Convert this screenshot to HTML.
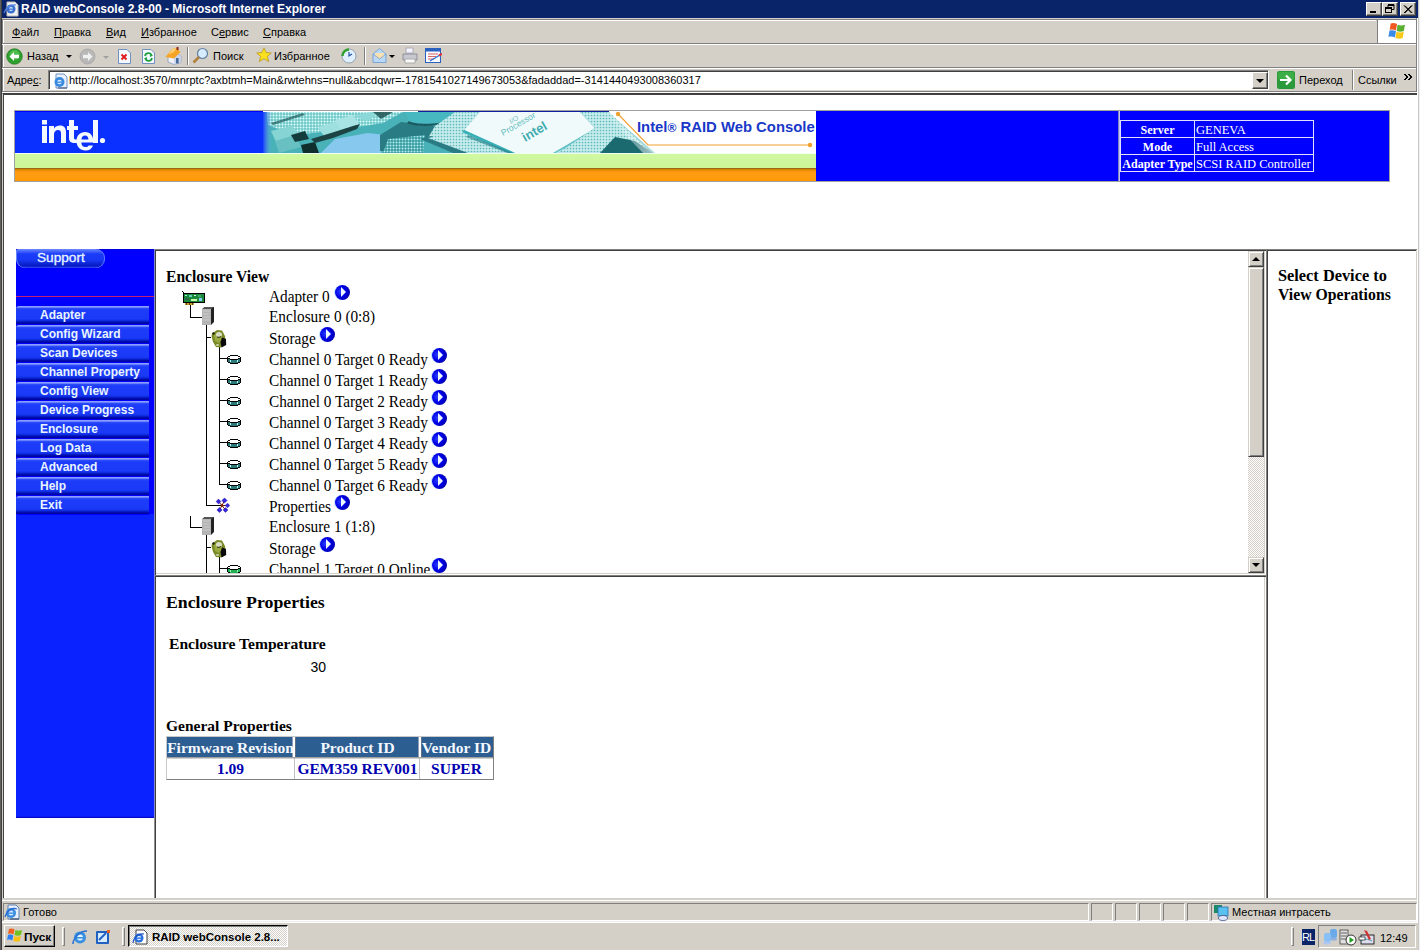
<!DOCTYPE html>
<html><head><meta charset="utf-8">
<style>
*{margin:0;padding:0;box-sizing:border-box}
html,body{width:1420px;height:950px;overflow:hidden;background:#D4D0C8;font-family:"Liberation Sans",sans-serif;}
.a{position:absolute}
.ui{z-index:2;font-family:"Liberation Sans",sans-serif;font-size:11px;color:#000;white-space:nowrap;line-height:13px}
u{text-decoration:underline;text-underline-offset:1px}
.sr{font-family:"Liberation Serif",serif;white-space:nowrap;color:#000}
.nb{position:absolute;left:16px;width:133px;height:19px;background:linear-gradient(#8c9cff 0,#8c9cff 1px,#6880ff 1px,#6880ff 2px,#3050f8 2px,#1c3cfa 4px,#1a3af8 13px,#0c28d8 15px,#0010b0 16px,#0000a0 18px,#0000ff 18px);border-radius:3px 0 0 3px}
.nb span{position:absolute;left:24px;top:2px;font:bold 12px/14px "Liberation Sans",sans-serif;color:#e8f4ff;white-space:nowrap}
.tr{position:absolute;left:269px;font:16px/18px "Liberation Serif",serif;white-space:nowrap;color:#000;transform:scaleX(.955);transform-origin:0 0}
.go{position:absolute;width:15px;height:15px;border-radius:50%;background:radial-gradient(circle at 35% 45%,#2a40ff 0,#0000e8 40%,#0000b0 75%,#000070 100%);box-shadow:-1px 0 0 rgba(120,200,255,.5)}
.go:after{content:"";position:absolute;left:6px;top:2px;border-left:5.5px solid #f0f8ff;border-top:5.2px solid transparent;border-bottom:5.2px solid transparent}
.vl{position:absolute;width:1px;background:#000}
.hl{position:absolute;height:1px;background:#000}
</style></head><body>

<!-- window frame -->
<div class="a" style="left:0;top:0;width:1420px;height:950px;background:#D4D0C8"></div>
<div class="a" style="left:0;top:0;width:1px;height:922px;background:#808080"></div>
<div class="a" style="left:1px;top:0;width:1px;height:922px;background:#404040"></div>

<!-- title bar -->
<div class="a" style="left:0;top:0;width:1418px;height:18px;background:#0A246A"></div>
<div class="a ui" style="left:21px;top:2px;font-weight:bold;font-size:12px;line-height:14px;color:#fff">RAID webConsole 2.8-00 - Microsoft Internet Explorer</div>

<!-- menu bar -->
<div class="a" style="left:2px;top:18px;width:1416px;height:1px;background:#d4d0c8"></div><div class="a" style="left:2px;top:19px;width:1414px;height:1px;background:#808080"></div><div class="a" style="left:3px;top:20px;width:1373px;height:1px;background:#fff"></div><div class="a" style="left:2px;top:19px;width:1px;height:75px;background:#808080"></div><div class="a" style="left:3px;top:20px;width:1px;height:73px;background:#fff"></div>
<div class="a ui" style="left:12px;top:26px"><u>Ф</u>айл</div>
<div class="a ui" style="left:54px;top:26px"><u>П</u>равка</div>
<div class="a ui" style="left:106px;top:26px"><u>В</u>ид</div>
<div class="a ui" style="left:141px;top:26px"><u>И</u>збранное</div>
<div class="a ui" style="left:211px;top:26px">С<u>е</u>рвис</div>
<div class="a ui" style="left:263px;top:26px"><u>С</u>правка</div>
<div class="a" style="left:2px;top:43px;width:1416px;height:1px;background:#808080"></div>
<div class="a" style="left:2px;top:44px;width:1416px;height:1px;background:#fff"></div>

<!-- toolbar -->
<div class="a ui" style="left:27px;top:50px">Назад</div>
<div class="a ui" style="left:213px;top:50px">Поиск</div>
<div class="a ui" style="left:274px;top:50px">Избранное</div>
<div class="a" style="left:2px;top:67px;width:1416px;height:1px;background:#808080"></div>
<div class="a" style="left:2px;top:68px;width:1416px;height:1px;background:#fff"></div>

<!-- address bar -->
<div class="a ui" style="left:7px;top:74px">Адре<u>с</u>:</div>
<div class="a ui" style="left:69px;top:74px">http://localhost:3570/mnrptc?axbtmh=Main&amp;rwtehns=null&amp;abcdqwr=-1781541027149673053&amp;fadaddad=-3141440493008360317</div>
<div class="a ui" style="left:1299px;top:74px">Переход</div>
<div class="a ui" style="left:1358px;top:74px">Ссылки</div>

<div class="a" style="left:1366px;top:2px;width:16px;height:14px;background:#D4D0C8;border-top:1px solid #fff;border-left:1px solid #fff;border-right:1px solid #404040;border-bottom:1px solid #404040;box-shadow:inset -1px -1px 0 #808080"></div>
<div class="a" style="left:1370px;top:11px;width:6px;height:2px;background:#000"></div>
<div class="a" style="left:1382px;top:2px;width:16px;height:14px;background:#D4D0C8;border-top:1px solid #fff;border-left:1px solid #fff;border-right:1px solid #404040;border-bottom:1px solid #404040;box-shadow:inset -1px -1px 0 #808080"></div>
<svg class="a" style="left:1385px;top:4px" width="10" height="10" viewBox="0 0 10 10"><path d="M3 0.5 h6 v5 h-2 M3 1.5 h6" stroke="#000" fill="none"/><path d="M3 1 v2" stroke="#000"/><rect x="0.5" y="3.5" width="6" height="5" fill="none" stroke="#000"/><path d="M0 4.5 h7" stroke="#000"/></svg>
<div class="a" style="left:1400px;top:2px;width:16px;height:14px;background:#D4D0C8;border-top:1px solid #fff;border-left:1px solid #fff;border-right:1px solid #404040;border-bottom:1px solid #404040;box-shadow:inset -1px -1px 0 #808080"></div>
<svg class="a" style="left:1403px;top:5px" width="10" height="9" viewBox="0 0 10 9"><path d="M1 0.5 L8.5 8 M1.8 0.5 L9.3 8 M8.5 0.5 L1 8 M9.3 0.5 L1.8 8" stroke="#000" stroke-width="1"/></svg>
<svg class="a" style="left:3px;top:1px" width="16" height="16" viewBox="0 0 16 16"><path d="M4 1 H12 L15 4 V15 H4 Z" fill="#f0f0f0" stroke="#c0c0c0"/><circle cx="8" cy="8" r="4.5" fill="#3a70d0"/><circle cx="8" cy="8" r="2" fill="#e0f0ff"/><rect x="5" y="7.5" width="6" height="1.3" fill="#3a70d0"/><path d="M1 12 C3 6 9 3 13 4" stroke="#5080e0" stroke-width="1.2" fill="none"/></svg>
<div class="a" style="left:1377px;top:20px;width:40px;height:24px;background:#fff;border-left:1px solid #808080;border-bottom:1px solid #808080"></div>
<svg class="a" style="left:1386px;top:22px" width="21" height="19" viewBox="0 0 19 18"><path d="M4 1.5 C6 0.5 8 1 10 2 L9 8 C7 7 5 6.8 3 7.5 Z" fill="#f05a22"/><path d="M10.5 2.5 C12.5 3.5 15 3.5 17.5 2.5 L16.5 8.5 C14 9.5 12 9.5 9.7 8.5 Z" fill="#5ab030"/><path d="M2.8 8.2 C5 7.5 7 7.7 9 8.7 L8 14.7 C6 13.7 4 13.5 1.8 14.2 Z" fill="#3a8ae8"/><path d="M9.5 9.2 C12 10.2 14 10.2 16.4 9.2 L15.4 15.2 C13 16.2 11 16.2 8.5 15.2 Z" fill="#f8c81a"/></svg>
<div class="a" style="left:1416px;top:18px;width:1px;height:76px;background:#808080"></div>
<div class="a" style="left:187px;top:47px;width:2px;height:18px;border-left:1px solid #808080;border-right:1px solid #fff"></div>
<div class="a" style="left:364px;top:47px;width:2px;height:18px;border-left:1px solid #808080;border-right:1px solid #fff"></div>
<svg class="a" style="left:6px;top:48px" width="17" height="17" viewBox="0 0 17 17"><circle cx="8.5" cy="8.5" r="7.8" fill="#2ea02e" stroke="#1a6a1a" stroke-width=".6"/><circle cx="8.5" cy="7" r="5" fill="#60d060" opacity=".6"/><path d="M3.5 8.5 L8 4 V6.8 H13 V10.2 H8 V13 Z" fill="#fff"/></svg>
<div class="a" style="left:66px;top:55px;border-top:3px solid #000;border-left:3px solid transparent;border-right:3px solid transparent"></div>
<svg class="a" style="left:79px;top:48px" width="17" height="17" viewBox="0 0 17 17"><circle cx="8.5" cy="8.5" r="7.5" fill="#b8b8b8" stroke="#999" stroke-width=".6"/><path d="M13.5 8.5 L9 4 V6.8 H4 V10.2 H9 V13 Z" fill="#f0f0f0"/></svg>
<div class="a" style="left:103px;top:56px;border-top:3px solid #a0a0a0;border-left:3px solid transparent;border-right:3px solid transparent"></div>
<svg class="a" style="left:117px;top:48px" width="15" height="17" viewBox="0 0 15 17"><path d="M1.5 1.5 H10 L13.5 5 V15.5 H1.5 Z" fill="#f4f8ff" stroke="#7090c0"/><path d="M4.5 6.5 L9.5 11.5 M9.5 6.5 L4.5 11.5" stroke="#e02020" stroke-width="2"/></svg>
<svg class="a" style="left:141px;top:48px" width="15" height="17" viewBox="0 0 15 17"><path d="M1.5 1.5 H10 L13.5 5 V15.5 H1.5 Z" fill="#f4f8ff" stroke="#7090c0"/><path d="M4 8 A3.5 3.5 0 0 1 10.5 7" stroke="#20a040" stroke-width="1.8" fill="none"/><path d="M11 10 A3.5 3.5 0 0 1 4.5 11" stroke="#20a040" stroke-width="1.8" fill="none"/><path d="M9 5 L12 7.5 L9 9Z M6 9 L3 10.5 L6 13Z" fill="#20a040"/></svg>
<svg class="a" style="left:165px;top:47px" width="17" height="18" viewBox="0 0 17 18"><path d="M3 9 L9 5 L16 9 V15.5 L9 17.5 L3 15 Z" fill="#eef2fc" stroke="#8898b8" stroke-width=".8"/><path d="M9 5 L16 9 V15.5 L9 17.5 Z" fill="#c8d4ec"/><path d="M0.5 10 L7 2 L12 1 L15.5 5 L9 11.5 Z" fill="#f6a428"/><path d="M7 2 L12 1 L9 5 L3.5 7.5 Z" fill="#fcd070"/><rect x="11" y="11" width="2.6" height="5.5" fill="#4a6a98"/><rect x="11.5" y="0" width="2" height="3" fill="#902818"/></svg>
<svg class="a" style="left:192px;top:47px" width="17" height="18" viewBox="0 0 17 18"><circle cx="10.5" cy="6.5" r="5" fill="#d8ecff" stroke="#6080a0" stroke-width="1.2"/><path d="M7 10 L1.5 15.5" stroke="#b08040" stroke-width="2.6"/></svg>
<svg class="a" style="left:256px;top:47px" width="16" height="16" viewBox="0 0 16 16"><path d="M8 0.8 L10.2 5.6 L15.3 6 L11.4 9.4 L12.7 14.6 L8 11.8 L3.3 14.6 L4.6 9.4 L0.7 6 L5.8 5.6 Z" fill="#f8e020" stroke="#b09010" stroke-width=".7"/></svg>
<svg class="a" style="left:341px;top:48px" width="16" height="16" viewBox="0 0 16 16"><circle cx="8" cy="8" r="7" fill="#e0f0ff" stroke="#8090a0" stroke-width=".8"/><path d="M1.5 8 A6.5 6.5 0 0 1 8 1.5" stroke="#30a030" stroke-width="2.4" fill="none"/><path d="M8 4 V8 L11 6" stroke="#2050a0" stroke-width="1.2" fill="none"/></svg>
<svg class="a" style="left:372px;top:47px" width="15" height="17" viewBox="0 0 15 17"><path d="M1 7 L7.5 1.5 L14 7 V15.5 H1 Z" fill="#b8d8f8" stroke="#6a9ad0" stroke-width=".8"/><path d="M3 6 H12 V10 L7.5 12 L3 10 Z" fill="#f8e0b0"/><path d="M1 7 L7.5 12 L14 7" stroke="#6a9ad0" fill="none" stroke-width=".8"/></svg>
<div class="a" style="left:389px;top:55px;border-top:3px solid #000;border-left:3px solid transparent;border-right:3px solid transparent"></div>
<svg class="a" style="left:402px;top:47px" width="16" height="17" viewBox="0 0 16 17"><path d="M4 1 H11 V6 H4 Z" fill="#f4f4ff" stroke="#a0a0b0" stroke-width=".8"/><path d="M1 7 H15 V13 H1 Z" fill="#c8c8d0" stroke="#808090" stroke-width=".8"/><path d="M3 12 H13 V16 H3 Z" fill="#f8f8f8" stroke="#a0a0a0" stroke-width=".8"/></svg>
<svg class="a" style="left:425px;top:47px" width="17" height="17" viewBox="0 0 17 17"><rect x="0.5" y="1.5" width="15" height="14" fill="#f8fbff" stroke="#2a60c0"/><rect x="0.5" y="1.5" width="15" height="3" fill="#2a60c0"/><path d="M3 7 H13 M3 9.5 H11 M3 12 H9" stroke="#d04040" stroke-width=".8"/><path d="M5 14 L15 8" stroke="#2a70d0" stroke-width="1.2"/><path d="M14 8.5 L17 7" stroke="#e03030" stroke-width="2"/></svg>
<div class="a" style="left:48px;top:70px;width:1221px;height:20px;background:#fff;border-top:1px solid #808080;border-left:1px solid #808080;border-bottom:1px solid #fff;border-right:1px solid #fff;box-shadow:inset 1px 1px 0 #404040"></div>
<svg class="a" style="left:52px;top:73px" width="16" height="16" viewBox="0 0 16 16"><path d="M4 1 H12 L15 4 V15 H4 Z" fill="#e8f0ff" stroke="#7090c0"/><path d="M6 15 H15" stroke="#405070"/><circle cx="7.5" cy="9" r="5" fill="#3a8ae0"/><circle cx="7.5" cy="9" r="2.3" fill="#d8ecff"/><rect x="4.5" y="8.5" width="6" height="1.3" fill="#3a8ae0"/></svg>
<div class="a" style="left:1252px;top:72px;width:16px;height:17px;background:#D4D0C8;border-top:1px solid #fff;border-left:1px solid #fff;border-right:1px solid #404040;border-bottom:1px solid #404040;box-shadow:inset -1px -1px 0 #808080"></div>
<div class="a" style="left:1256px;top:79px;border-top:4px solid #000;border-left:4px solid transparent;border-right:4px solid transparent"></div>
<svg class="a" style="left:1277px;top:71px" width="18" height="18" viewBox="0 0 18 18"><rect x="0" y="0" width="18" height="18" rx="2" fill="#2a9a3a"/><rect x="1" y="1" width="16" height="8" rx="2" fill="#50c050" opacity=".5"/><path d="M3 9 H13 M9 4.5 L13.5 9 L9 13.5" stroke="#fff" stroke-width="2.2" fill="none"/></svg>
<div class="a" style="left:1352px;top:70px;width:2px;height:20px;border-left:1px solid #808080;border-right:1px solid #fff"></div>
<svg class="a" style="left:1404px;top:74px" width="9" height="6" viewBox="0 0 9 6" shape-rendering="crispEdges"><path d="M0 0h2v1h1v1h1v2h-1v1h-1v1h-2v-1h1v-1h1v-2h-1v-1h-1z M4 0h2v1h1v1h1v2h-1v1h-1v1h-2v-1h1v-1h1v-2h-1v-1h-1z" fill="#000"/></svg>
<!-- content area -->
<div class="a" style="left:2px;top:91px;width:1416px;height:1px;background:#808080"></div>
<div class="a" style="left:2px;top:92px;width:1416px;height:1px;background:#fff"></div>
<div class="a" style="left:3px;top:93px;width:1414px;height:805px;background:#fff;border-top:2px solid #404040;border-left:1px solid #404040"></div>


<!-- ===== BANNER ===== -->
<div class="a" style="left:14px;top:110px;width:1376px;height:72px;background:#a0a0a0"></div>
<div class="a" style="left:15px;top:111px;width:1374px;height:70px;background:#0000ff"></div>
<div class="a" style="left:15px;top:112px;width:248px;height:41px;background:#0a30ff"></div>
<svg class="a" style="left:263px;top:111px" width="553" height="42" viewBox="0 0 553 42">
<defs>
<pattern id="dl" width="3" height="3" patternUnits="userSpaceOnUse"><rect width="3" height="3" fill="#c6ecec"/><circle cx="1.5" cy="1.5" r=".85" fill="#5cb8bc"/></pattern>
<pattern id="dd" width="3" height="3" patternUnits="userSpaceOnUse"><rect width="3" height="3" fill="#3a9aa0"/><circle cx="1.5" cy="1.5" r="1" fill="#b0f0f0"/></pattern>
<pattern id="d2" width="3" height="3" patternUnits="userSpaceOnUse"><rect width="3" height="3" fill="#70c8c8"/><circle cx="1.5" cy="1.5" r="1" fill="#e0ffff"/></pattern>
<linearGradient id="lb" x1="0" x2="1"><stop offset="0" stop-color="#1a3cff"/><stop offset="1" stop-color="#6ab0e8" stop-opacity="0"/></linearGradient>
<linearGradient id="fw" x1="0" x2="1"><stop offset="0" stop-color="#fff" stop-opacity="0"/><stop offset="1" stop-color="#fff"/></linearGradient>
</defs>
<rect width="553" height="42" fill="#fff"/>
<rect x="155" y="0" width="191" height="1.5" fill="#1020a0"/>
<path d="M0 1 H345 L392 42 H0 Z" fill="#48b2b8"/>
<path d="M4 1 H140 L120 12 L70 20 L30 24 L5 14 Z" fill="url(#d2)"/>
<path d="M8 20 L28 15 L36 24 L14 33 Z" fill="#86d4d4"/>
<path d="M12 30 L32 24 L38 36 L16 42 Z" fill="#68c0c2"/>
<path d="M55 16 L75 10 L82 20 L62 27 Z" fill="#9ee0e0"/>
<path d="M72 9 L90 4 L96 13 L78 19 Z" fill="#a8e4e4"/>
<path d="M90 5 L108 1 H118 L104 10 Z" fill="#8cd8d8"/>
<path d="M58 42 L72 28 L105 22 L122 24 L118 42 Z" fill="#86c8ee"/>
<path d="M28 24 L42 20 L46 28 L32 31 Z" fill="#143c3c"/>
<path d="M38 34 L52 31 L56 42 H40 Z" fill="#102e2e"/>
<path d="M48 28 L68 22 L90 15 L97 13 L94 18 L70 27 L52 32 Z" fill="#1c4444"/>
<path d="M8 12 L40 2 L42 4 L10 14 Z" fill="#1e5a5a" opacity=".7"/>
<path d="M110 1 H130 L118 8 Z" fill="#1a4a4a" opacity=".8"/>
<path d="M117 24 L138 11 L172 15 L166 27 L142 30 L125 40 L117 40 Z" fill="#2a7c84"/>
<path d="M125 28 L162 24 L160 42 H120 Z" fill="url(#dd)"/>
<path d="M142 1 H192 L186 8 C178 14 152 14 146 10 Z" fill="#48b8c0"/>
<path d="M146 10 C152 14 178 14 186 8 L184 11 C176 16 152 16 144 12 Z" fill="#1a5a60"/>
<path d="M172 15 L192 1 H218 L200 20 L185 30 L165 27 Z" fill="url(#dl)"/>
<path d="M157 28 L168 25 L205 40 L203 42 H190 Z" fill="#2a7c84"/>
<path d="M200 20 L252 42 H205 L165 27 Z" fill="url(#dl)"/>
<path d="M201 19 L217 1 H317 L332 17 L295 42 H252 Z" fill="#f0fafa"/>
<path d="M201 19 L252 42 H246 L199 21 Z" fill="#3ab0b8"/>
<path d="M205 24 L250 42 H244 L203 26 Z" fill="#1a7a80" opacity=".6"/>
<path d="M332 17 L295 42 H298 L334 19 Z M324 22 L290 42 H293 L326 24Z" fill="#60c0c4"/>
<text transform="translate(240 25) rotate(-30)" font-family="Liberation Sans" font-size="8.5" fill="#60bcbc">Processor</text>
<text transform="translate(248 13) rotate(-30)" font-family="Liberation Sans" font-size="7" fill="#70c4c4">I/O</text>
<text transform="translate(262 31) rotate(-30)" font-family="Liberation Sans" font-weight="bold" font-size="13" fill="#40acb0">intel</text>
<path d="M317 1 H346 L372 26 L388 42 H295 L332 17 Z" fill="url(#dl)"/>
<path d="M337 42 L352 26 L372 30 L390 42 Z" fill="#1a6a70"/>
<path d="M340 1 H350 L392 42 H380 Z" fill="url(#fw)" opacity=".6"/>
<rect x="0" y="1" width="9" height="41" fill="url(#lb)"/>
<path d="M355 3 L385 34 H547" stroke="#f0a030" stroke-width="1.1" fill="none"/>
<circle cx="355" cy="3" r="2.2" fill="#f0a030"/>
<circle cx="547" cy="34" r="2.2" fill="#f0a030"/>
</svg>
<div class="a" style="left:15px;top:153px;width:801px;height:15px;background:linear-gradient(#f0fff0 0,#f0fff0 1px,#d0f8a0 1px,#ccf598 100%)"></div>
<div class="a" style="left:15px;top:168px;width:801px;height:1px;background:#9a6a10"></div>
<div class="a" style="left:15px;top:169px;width:801px;height:12px;background:linear-gradient(#d08000 0,#ff9a10 3px,#ff9c10 60%,#ff9900)"></div>
<svg class="a" style="left:38px;top:116px" width="72" height="38" viewBox="0 0 72 38">
<g fill="#f4f8ff">
<rect x="4" y="4" width="5" height="4.5"/><rect x="4" y="10" width="5" height="17"/>
<path d="M11 10 H16 V12.5 C17.5 10.5 19.5 9.6 22 9.6 C26 9.6 28 12 28 16.5 V27 H23 V17.5 C23 15 22 14 20 14 C17.8 14 16 15.5 16 18.5 V27 H11 Z"/>
<path d="M31 4 H36 V10 H40 V14 H36 V21.5 C36 23 36.6 23.5 38 23.5 H40 V27 H37 C32.5 27 31 25.5 31 21.5 V14 H29 V10 H31 Z"/>
<path d="M47 16 C42 16 38.5 19.5 38.5 25 C38.5 30.5 42 34.5 47.5 34.5 C51.5 34.5 54 32.5 55 29.5 H50.5 C50 30.5 49 31 47.5 31 C45 31 43.5 29.5 43.3 26.5 H55.3 C55.5 20 52.5 16 47 16 Z M43.4 23.4 C43.7 21 45 19.5 47 19.5 C49 19.5 50.3 21 50.5 23.4 Z"/>
<rect x="55" y="4" width="5" height="23"/>
<circle cx="64.5" cy="24.5" r="2.6"/>
</g></svg>
<div class="a" style="left:637px;top:119px;font:bold 14.7px/17px 'Liberation Sans',sans-serif;color:#1838c8;white-space:nowrap;transform:scaleX(1.01);transform-origin:0 0">Intel<span style="font-size:12px">®</span> RAID Web Console</div>

<!-- banner info table -->
<div class="a" style="left:1118px;top:111px;width:2px;height:70px;background:#c0c0ff;border-left:1px solid #8080c0"></div>
<div class="a" style="left:1120px;top:120px;width:194px;height:52px;border:1px solid #e0e0ff"></div>
<div class="a" style="left:1121px;top:137px;width:192px;height:1px;background:#e0e0ff"></div>
<div class="a" style="left:1121px;top:154px;width:192px;height:1px;background:#e0e0ff"></div>
<div class="a" style="left:1194px;top:121px;width:1px;height:50px;background:#e0e0ff"></div>
<div class="a" style="left:1121px;top:123px;width:73px;text-align:center;font:bold 12px/14px 'Liberation Serif',serif;color:#fff">Server</div>
<div class="a" style="left:1121px;top:140px;width:73px;text-align:center;font:bold 12px/14px 'Liberation Serif',serif;color:#fff">Mode</div>
<div class="a" style="left:1121px;top:157px;width:73px;text-align:center;font:bold 12px/14px 'Liberation Serif',serif;color:#fff;white-space:nowrap">Adapter Type</div>
<div class="a" style="left:1196px;top:123px;font:12.5px/14px 'Liberation Serif',serif;color:#fff;white-space:nowrap">GENEVA</div>
<div class="a" style="left:1196px;top:140px;font:12.5px/14px 'Liberation Serif',serif;color:#fff;white-space:nowrap">Full Access</div>
<div class="a" style="left:1196px;top:157px;font:12.5px/14px 'Liberation Serif',serif;color:#fff;white-space:nowrap">SCSI RAID Controller</div>

<!-- ===== LEFT NAV ===== -->
<div class="a" style="left:16px;top:249px;width:138px;height:569px;background:linear-gradient(#0000c0 0,#0000ff 1px,#0000ff 265px,#0a22ff 265px,#0a22ff 567px,#0000c0 569px)"></div>
<div class="a" style="left:16px;top:249px;width:89px;height:19px;border-radius:3px 9px 9px 9px;background:linear-gradient(#7088ff 0,#4a68ff 2px,#1a3cf8 5px,#1838f4 11px,#0a24d0 15px,#0818c0 17px,#3050ff 19px);box-shadow:inset 1px 0 0 #6a84ff,inset -1px 0 0 #5a78ff"></div>
<div class="a" style="left:37px;top:252px;font:normal 12.4px/13px 'Liberation Sans',sans-serif;color:#e8f4ff;-webkit-text-stroke:.3px #e8f4ff;transform:scaleX(1.1);transform-origin:0 0">Support</div>
<div class="a" style="left:16px;top:296px;width:138px;height:1px;background:#c02070"></div>
<div class="nb" style="top:306px"><span>Adapter</span></div>
<div class="nb" style="top:325px"><span>Config Wizard</span></div>
<div class="nb" style="top:344px"><span>Scan Devices</span></div>
<div class="nb" style="top:363px"><span>Channel Property</span></div>
<div class="nb" style="top:382px"><span>Config View</span></div>
<div class="nb" style="top:401px"><span>Device Progress</span></div>
<div class="nb" style="top:420px"><span>Enclosure</span></div>
<div class="nb" style="top:439px"><span>Log Data</span></div>
<div class="nb" style="top:458px"><span>Advanced</span></div>
<div class="nb" style="top:477px"><span>Help</span></div>
<div class="nb" style="top:496px"><span>Exit</span></div>

<!-- ===== FRAME BORDERS ===== -->
<div class="a" style="left:155px;top:249px;width:1262px;height:1px;background:#808080"></div>
<div class="a" style="left:156px;top:250px;width:1261px;height:1px;background:#404040"></div>
<div class="a" style="left:154px;top:249px;width:1px;height:569px;background:#8088d0"></div>
<div class="a" style="left:154px;top:818px;width:1px;height:80px;background:#909090"></div>
<div class="a" style="left:155px;top:250px;width:1px;height:648px;background:#404040"></div>
<div class="a" style="left:156px;top:573px;width:1109px;height:1px;background:#d4d0c8"></div>
<div class="a" style="left:156px;top:574px;width:1110px;height:1px;background:#fff"></div>
<div class="a" style="left:1264px;top:251px;width:1px;height:323px;background:#d4d0c8"></div>
<div class="a" style="left:1265px;top:251px;width:1px;height:324px;background:#fff"></div>
<div class="a" style="left:155px;top:575px;width:1111px;height:1px;background:#808080"></div>
<div class="a" style="left:156px;top:576px;width:1110px;height:1px;background:#404040"></div>
<div class="a" style="left:1264px;top:577px;width:1px;height:321px;background:#d4d0c8"></div>
<div class="a" style="left:1265px;top:577px;width:1px;height:321px;background:#fff"></div>
<div class="a" style="left:1266px;top:249px;width:1px;height:649px;background:#808080"></div>
<div class="a" style="left:1267px;top:250px;width:1px;height:648px;background:#404040"></div>
<div class="a" style="left:1416px;top:250px;width:1px;height:648px;background:#d4d0c8"></div>
<!-- scrollbar -->
<div class="a" style="left:1248px;top:251px;width:16px;height:322px;background:repeating-conic-gradient(#d4d0c8 0 25%,#fff 0 50%) 0 0/2px 2px"></div>
<div class="a" style="left:1248px;top:251px;width:16px;height:16px;background:#d4d0c8;border-top:1px solid #d4d0c8;border-left:1px solid #d4d0c8;border-right:1px solid #404040;border-bottom:1px solid #404040;box-shadow:inset 1px 1px 0 #fff,inset -1px -1px 0 #808080"></div>
<div class="a" style="left:1252px;top:257px;border-bottom:4px solid #000;border-left:4px solid transparent;border-right:4px solid transparent"></div>
<div class="a" style="left:1248px;top:267px;width:16px;height:190px;background:#d4d0c8;border-top:1px solid #d4d0c8;border-left:1px solid #d4d0c8;border-right:1px solid #404040;border-bottom:1px solid #404040;box-shadow:inset 1px 1px 0 #fff,inset -1px -1px 0 #808080"></div>
<div class="a" style="left:1248px;top:557px;width:16px;height:16px;background:#d4d0c8;border-top:1px solid #d4d0c8;border-left:1px solid #d4d0c8;border-right:1px solid #404040;border-bottom:1px solid #404040;box-shadow:inset 1px 1px 0 #fff,inset -1px -1px 0 #808080"></div>
<div class="a" style="left:1252px;top:563px;border-top:4px solid #000;border-left:4px solid transparent;border-right:4px solid transparent"></div>
<!-- ===== TREE ===== -->
<div class="a sr" style="left:166px;top:268px;font-weight:bold;font-size:16.5px;line-height:18px;transform:scaleX(.945);transform-origin:0 0">Enclosure View</div>
<div class="tr" style="top:288px">Adapter 0</div><div class="go" style="left:335px;top:285px"></div>
<div class="tr" style="top:308px">Enclosure 0 (0:8)</div>
<div class="tr" style="top:330px">Storage</div><div class="go" style="left:320px;top:327px"></div>
<div class="tr" style="top:351px">Channel 0 Target 0 Ready</div><div class="go" style="left:432px;top:348px"></div>
<div class="tr" style="top:372px">Channel 0 Target 1 Ready</div><div class="go" style="left:432px;top:369px"></div>
<div class="tr" style="top:393px">Channel 0 Target 2 Ready</div><div class="go" style="left:432px;top:390px"></div>
<div class="tr" style="top:414px">Channel 0 Target 3 Ready</div><div class="go" style="left:432px;top:411px"></div>
<div class="tr" style="top:435px">Channel 0 Target 4 Ready</div><div class="go" style="left:432px;top:432px"></div>
<div class="tr" style="top:456px">Channel 0 Target 5 Ready</div><div class="go" style="left:432px;top:453px"></div>
<div class="tr" style="top:477px">Channel 0 Target 6 Ready</div><div class="go" style="left:432px;top:474px"></div>
<div class="tr" style="top:498px">Properties</div><div class="go" style="left:335px;top:495px"></div>
<div class="tr" style="top:518px">Enclosure 1 (1:8)</div>
<div class="tr" style="top:540px">Storage</div><div class="go" style="left:320px;top:537px"></div>
<div class="a" style="left:156px;top:251px;width:1092px;height:322px;overflow:hidden">
 <div class="tr" style="left:113px;top:310px">Channel 1 Target 0 Online</div><div class="go" style="left:276px;top:307px"></div>
</div>

<div class="a" style="left:0;top:0;width:1420px;height:573px;overflow:hidden"><div class="a" style="left:190px;top:304px;width:1px;height:14px;background:#000"></div>
<div class="a" style="left:190px;top:317px;width:12px;height:1px;background:#000"></div>
<div class="a" style="left:206px;top:325px;width:1px;height:181px;background:#000"></div>
<div class="a" style="left:206px;top:337px;width:5px;height:1px;background:#000"></div>
<div class="a" style="left:206px;top:505px;width:16px;height:1px;background:#000"></div>
<div class="a" style="left:219px;top:347px;width:1px;height:138px;background:#000"></div>
<div class="a" style="left:219px;top:358px;width:8px;height:1px;background:#000"></div>
<svg class="a" style="left:227px;top:355px" width="14" height="9" viewBox="0 0 14 9" shape-rendering="crispEdges"><rect x="3" y="0" width="1" height="1" fill="#000"/><rect x="4" y="0" width="1" height="1" fill="#000"/><rect x="5" y="0" width="1" height="1" fill="#000"/><rect x="6" y="0" width="1" height="1" fill="#000"/><rect x="7" y="0" width="1" height="1" fill="#000"/><rect x="8" y="0" width="1" height="1" fill="#000"/><rect x="9" y="0" width="1" height="1" fill="#000"/><rect x="10" y="0" width="1" height="1" fill="#000"/><rect x="1" y="1" width="1" height="1" fill="#000"/><rect x="2" y="1" width="1" height="1" fill="#000"/><rect x="3" y="1" width="1" height="1" fill="#fff"/><rect x="4" y="1" width="1" height="1" fill="#fff"/><rect x="5" y="1" width="1" height="1" fill="#fff"/><rect x="6" y="1" width="1" height="1" fill="#fff"/><rect x="7" y="1" width="1" height="1" fill="#fff"/><rect x="8" y="1" width="1" height="1" fill="#fff"/><rect x="9" y="1" width="1" height="1" fill="#fff"/><rect x="10" y="1" width="1" height="1" fill="#fff"/><rect x="11" y="1" width="1" height="1" fill="#000"/><rect x="12" y="1" width="1" height="1" fill="#000"/><rect x="0" y="2" width="1" height="1" fill="#000"/><rect x="1" y="2" width="1" height="1" fill="#fff"/><rect x="2" y="2" width="1" height="1" fill="#fff"/><rect x="3" y="2" width="1" height="1" fill="#fff"/><rect x="4" y="2" width="1" height="1" fill="#fff"/><rect x="5" y="2" width="1" height="1" fill="#fff"/><rect x="6" y="2" width="1" height="1" fill="#fff"/><rect x="7" y="2" width="1" height="1" fill="#fff"/><rect x="8" y="2" width="1" height="1" fill="#fff"/><rect x="9" y="2" width="1" height="1" fill="#fff"/><rect x="10" y="2" width="1" height="1" fill="#fff"/><rect x="11" y="2" width="1" height="1" fill="#fff"/><rect x="12" y="2" width="1" height="1" fill="#fff"/><rect x="13" y="2" width="1" height="1" fill="#000"/><rect x="0" y="3" width="1" height="1" fill="#000"/><rect x="1" y="3" width="1" height="1" fill="#000"/><rect x="2" y="3" width="1" height="1" fill="#000"/><rect x="3" y="3" width="1" height="1" fill="#fff"/><rect x="4" y="3" width="1" height="1" fill="#fff"/><rect x="5" y="3" width="1" height="1" fill="#fff"/><rect x="6" y="3" width="1" height="1" fill="#fff"/><rect x="7" y="3" width="1" height="1" fill="#fff"/><rect x="8" y="3" width="1" height="1" fill="#fff"/><rect x="9" y="3" width="1" height="1" fill="#fff"/><rect x="10" y="3" width="1" height="1" fill="#fff"/><rect x="11" y="3" width="1" height="1" fill="#000"/><rect x="12" y="3" width="1" height="1" fill="#000"/><rect x="13" y="3" width="1" height="1" fill="#000"/><rect x="0" y="4" width="1" height="1" fill="#000"/><rect x="1" y="4" width="1" height="1" fill="#2a7878"/><rect x="2" y="4" width="1" height="1" fill="#2a7878"/><rect x="3" y="4" width="1" height="1" fill="#000"/><rect x="4" y="4" width="1" height="1" fill="#000"/><rect x="5" y="4" width="1" height="1" fill="#000"/><rect x="6" y="4" width="1" height="1" fill="#000"/><rect x="7" y="4" width="1" height="1" fill="#000"/><rect x="8" y="4" width="1" height="1" fill="#000"/><rect x="9" y="4" width="1" height="1" fill="#000"/><rect x="10" y="4" width="1" height="1" fill="#000"/><rect x="11" y="4" width="1" height="1" fill="#2a7878"/><rect x="12" y="4" width="1" height="1" fill="#2a7878"/><rect x="13" y="4" width="1" height="1" fill="#000"/><rect x="0" y="5" width="1" height="1" fill="#000"/><rect x="1" y="5" width="1" height="1" fill="#2a7878"/><rect x="2" y="5" width="1" height="1" fill="#2a7878"/><rect x="3" y="5" width="1" height="1" fill="#c0ffff"/><rect x="4" y="5" width="1" height="1" fill="#2a7878"/><rect x="5" y="5" width="1" height="1" fill="#2a7878"/><rect x="6" y="5" width="1" height="1" fill="#2a7878"/><rect x="7" y="5" width="1" height="1" fill="#2a7878"/><rect x="8" y="5" width="1" height="1" fill="#2a7878"/><rect x="9" y="5" width="1" height="1" fill="#2a7878"/><rect x="10" y="5" width="1" height="1" fill="#c0ffff"/><rect x="11" y="5" width="1" height="1" fill="#2a7878"/><rect x="12" y="5" width="1" height="1" fill="#2a7878"/><rect x="13" y="5" width="1" height="1" fill="#000"/><rect x="0" y="6" width="1" height="1" fill="#000"/><rect x="1" y="6" width="1" height="1" fill="#2a7878"/><rect x="2" y="6" width="1" height="1" fill="#2a7878"/><rect x="3" y="6" width="1" height="1" fill="#c0ffff"/><rect x="4" y="6" width="1" height="1" fill="#2a7878"/><rect x="5" y="6" width="1" height="1" fill="#2a7878"/><rect x="6" y="6" width="1" height="1" fill="#2a7878"/><rect x="7" y="6" width="1" height="1" fill="#2a7878"/><rect x="8" y="6" width="1" height="1" fill="#2a7878"/><rect x="9" y="6" width="1" height="1" fill="#2a7878"/><rect x="10" y="6" width="1" height="1" fill="#c0ffff"/><rect x="11" y="6" width="1" height="1" fill="#2a7878"/><rect x="12" y="6" width="1" height="1" fill="#2a7878"/><rect x="13" y="6" width="1" height="1" fill="#000"/><rect x="1" y="7" width="1" height="1" fill="#000"/><rect x="2" y="7" width="1" height="1" fill="#000"/><rect x="3" y="7" width="1" height="1" fill="#2a7878"/><rect x="4" y="7" width="1" height="1" fill="#2a7878"/><rect x="5" y="7" width="1" height="1" fill="#2a7878"/><rect x="6" y="7" width="1" height="1" fill="#2a7878"/><rect x="7" y="7" width="1" height="1" fill="#2a7878"/><rect x="8" y="7" width="1" height="1" fill="#2a7878"/><rect x="9" y="7" width="1" height="1" fill="#2a7878"/><rect x="10" y="7" width="1" height="1" fill="#2a7878"/><rect x="11" y="7" width="1" height="1" fill="#000"/><rect x="12" y="7" width="1" height="1" fill="#000"/><rect x="3" y="8" width="1" height="1" fill="#000"/><rect x="4" y="8" width="1" height="1" fill="#000"/><rect x="5" y="8" width="1" height="1" fill="#000"/><rect x="6" y="8" width="1" height="1" fill="#000"/><rect x="7" y="8" width="1" height="1" fill="#000"/><rect x="8" y="8" width="1" height="1" fill="#000"/><rect x="9" y="8" width="1" height="1" fill="#000"/><rect x="10" y="8" width="1" height="1" fill="#000"/></svg>
<div class="a" style="left:219px;top:379px;width:8px;height:1px;background:#000"></div>
<svg class="a" style="left:227px;top:376px" width="14" height="9" viewBox="0 0 14 9" shape-rendering="crispEdges"><rect x="3" y="0" width="1" height="1" fill="#000"/><rect x="4" y="0" width="1" height="1" fill="#000"/><rect x="5" y="0" width="1" height="1" fill="#000"/><rect x="6" y="0" width="1" height="1" fill="#000"/><rect x="7" y="0" width="1" height="1" fill="#000"/><rect x="8" y="0" width="1" height="1" fill="#000"/><rect x="9" y="0" width="1" height="1" fill="#000"/><rect x="10" y="0" width="1" height="1" fill="#000"/><rect x="1" y="1" width="1" height="1" fill="#000"/><rect x="2" y="1" width="1" height="1" fill="#000"/><rect x="3" y="1" width="1" height="1" fill="#fff"/><rect x="4" y="1" width="1" height="1" fill="#fff"/><rect x="5" y="1" width="1" height="1" fill="#fff"/><rect x="6" y="1" width="1" height="1" fill="#fff"/><rect x="7" y="1" width="1" height="1" fill="#fff"/><rect x="8" y="1" width="1" height="1" fill="#fff"/><rect x="9" y="1" width="1" height="1" fill="#fff"/><rect x="10" y="1" width="1" height="1" fill="#fff"/><rect x="11" y="1" width="1" height="1" fill="#000"/><rect x="12" y="1" width="1" height="1" fill="#000"/><rect x="0" y="2" width="1" height="1" fill="#000"/><rect x="1" y="2" width="1" height="1" fill="#fff"/><rect x="2" y="2" width="1" height="1" fill="#fff"/><rect x="3" y="2" width="1" height="1" fill="#fff"/><rect x="4" y="2" width="1" height="1" fill="#fff"/><rect x="5" y="2" width="1" height="1" fill="#fff"/><rect x="6" y="2" width="1" height="1" fill="#fff"/><rect x="7" y="2" width="1" height="1" fill="#fff"/><rect x="8" y="2" width="1" height="1" fill="#fff"/><rect x="9" y="2" width="1" height="1" fill="#fff"/><rect x="10" y="2" width="1" height="1" fill="#fff"/><rect x="11" y="2" width="1" height="1" fill="#fff"/><rect x="12" y="2" width="1" height="1" fill="#fff"/><rect x="13" y="2" width="1" height="1" fill="#000"/><rect x="0" y="3" width="1" height="1" fill="#000"/><rect x="1" y="3" width="1" height="1" fill="#000"/><rect x="2" y="3" width="1" height="1" fill="#000"/><rect x="3" y="3" width="1" height="1" fill="#fff"/><rect x="4" y="3" width="1" height="1" fill="#fff"/><rect x="5" y="3" width="1" height="1" fill="#fff"/><rect x="6" y="3" width="1" height="1" fill="#fff"/><rect x="7" y="3" width="1" height="1" fill="#fff"/><rect x="8" y="3" width="1" height="1" fill="#fff"/><rect x="9" y="3" width="1" height="1" fill="#fff"/><rect x="10" y="3" width="1" height="1" fill="#fff"/><rect x="11" y="3" width="1" height="1" fill="#000"/><rect x="12" y="3" width="1" height="1" fill="#000"/><rect x="13" y="3" width="1" height="1" fill="#000"/><rect x="0" y="4" width="1" height="1" fill="#000"/><rect x="1" y="4" width="1" height="1" fill="#2a7878"/><rect x="2" y="4" width="1" height="1" fill="#2a7878"/><rect x="3" y="4" width="1" height="1" fill="#000"/><rect x="4" y="4" width="1" height="1" fill="#000"/><rect x="5" y="4" width="1" height="1" fill="#000"/><rect x="6" y="4" width="1" height="1" fill="#000"/><rect x="7" y="4" width="1" height="1" fill="#000"/><rect x="8" y="4" width="1" height="1" fill="#000"/><rect x="9" y="4" width="1" height="1" fill="#000"/><rect x="10" y="4" width="1" height="1" fill="#000"/><rect x="11" y="4" width="1" height="1" fill="#2a7878"/><rect x="12" y="4" width="1" height="1" fill="#2a7878"/><rect x="13" y="4" width="1" height="1" fill="#000"/><rect x="0" y="5" width="1" height="1" fill="#000"/><rect x="1" y="5" width="1" height="1" fill="#2a7878"/><rect x="2" y="5" width="1" height="1" fill="#2a7878"/><rect x="3" y="5" width="1" height="1" fill="#c0ffff"/><rect x="4" y="5" width="1" height="1" fill="#2a7878"/><rect x="5" y="5" width="1" height="1" fill="#2a7878"/><rect x="6" y="5" width="1" height="1" fill="#2a7878"/><rect x="7" y="5" width="1" height="1" fill="#2a7878"/><rect x="8" y="5" width="1" height="1" fill="#2a7878"/><rect x="9" y="5" width="1" height="1" fill="#2a7878"/><rect x="10" y="5" width="1" height="1" fill="#c0ffff"/><rect x="11" y="5" width="1" height="1" fill="#2a7878"/><rect x="12" y="5" width="1" height="1" fill="#2a7878"/><rect x="13" y="5" width="1" height="1" fill="#000"/><rect x="0" y="6" width="1" height="1" fill="#000"/><rect x="1" y="6" width="1" height="1" fill="#2a7878"/><rect x="2" y="6" width="1" height="1" fill="#2a7878"/><rect x="3" y="6" width="1" height="1" fill="#c0ffff"/><rect x="4" y="6" width="1" height="1" fill="#2a7878"/><rect x="5" y="6" width="1" height="1" fill="#2a7878"/><rect x="6" y="6" width="1" height="1" fill="#2a7878"/><rect x="7" y="6" width="1" height="1" fill="#2a7878"/><rect x="8" y="6" width="1" height="1" fill="#2a7878"/><rect x="9" y="6" width="1" height="1" fill="#2a7878"/><rect x="10" y="6" width="1" height="1" fill="#c0ffff"/><rect x="11" y="6" width="1" height="1" fill="#2a7878"/><rect x="12" y="6" width="1" height="1" fill="#2a7878"/><rect x="13" y="6" width="1" height="1" fill="#000"/><rect x="1" y="7" width="1" height="1" fill="#000"/><rect x="2" y="7" width="1" height="1" fill="#000"/><rect x="3" y="7" width="1" height="1" fill="#2a7878"/><rect x="4" y="7" width="1" height="1" fill="#2a7878"/><rect x="5" y="7" width="1" height="1" fill="#2a7878"/><rect x="6" y="7" width="1" height="1" fill="#2a7878"/><rect x="7" y="7" width="1" height="1" fill="#2a7878"/><rect x="8" y="7" width="1" height="1" fill="#2a7878"/><rect x="9" y="7" width="1" height="1" fill="#2a7878"/><rect x="10" y="7" width="1" height="1" fill="#2a7878"/><rect x="11" y="7" width="1" height="1" fill="#000"/><rect x="12" y="7" width="1" height="1" fill="#000"/><rect x="3" y="8" width="1" height="1" fill="#000"/><rect x="4" y="8" width="1" height="1" fill="#000"/><rect x="5" y="8" width="1" height="1" fill="#000"/><rect x="6" y="8" width="1" height="1" fill="#000"/><rect x="7" y="8" width="1" height="1" fill="#000"/><rect x="8" y="8" width="1" height="1" fill="#000"/><rect x="9" y="8" width="1" height="1" fill="#000"/><rect x="10" y="8" width="1" height="1" fill="#000"/></svg>
<div class="a" style="left:219px;top:400px;width:8px;height:1px;background:#000"></div>
<svg class="a" style="left:227px;top:397px" width="14" height="9" viewBox="0 0 14 9" shape-rendering="crispEdges"><rect x="3" y="0" width="1" height="1" fill="#000"/><rect x="4" y="0" width="1" height="1" fill="#000"/><rect x="5" y="0" width="1" height="1" fill="#000"/><rect x="6" y="0" width="1" height="1" fill="#000"/><rect x="7" y="0" width="1" height="1" fill="#000"/><rect x="8" y="0" width="1" height="1" fill="#000"/><rect x="9" y="0" width="1" height="1" fill="#000"/><rect x="10" y="0" width="1" height="1" fill="#000"/><rect x="1" y="1" width="1" height="1" fill="#000"/><rect x="2" y="1" width="1" height="1" fill="#000"/><rect x="3" y="1" width="1" height="1" fill="#fff"/><rect x="4" y="1" width="1" height="1" fill="#fff"/><rect x="5" y="1" width="1" height="1" fill="#fff"/><rect x="6" y="1" width="1" height="1" fill="#fff"/><rect x="7" y="1" width="1" height="1" fill="#fff"/><rect x="8" y="1" width="1" height="1" fill="#fff"/><rect x="9" y="1" width="1" height="1" fill="#fff"/><rect x="10" y="1" width="1" height="1" fill="#fff"/><rect x="11" y="1" width="1" height="1" fill="#000"/><rect x="12" y="1" width="1" height="1" fill="#000"/><rect x="0" y="2" width="1" height="1" fill="#000"/><rect x="1" y="2" width="1" height="1" fill="#fff"/><rect x="2" y="2" width="1" height="1" fill="#fff"/><rect x="3" y="2" width="1" height="1" fill="#fff"/><rect x="4" y="2" width="1" height="1" fill="#fff"/><rect x="5" y="2" width="1" height="1" fill="#fff"/><rect x="6" y="2" width="1" height="1" fill="#fff"/><rect x="7" y="2" width="1" height="1" fill="#fff"/><rect x="8" y="2" width="1" height="1" fill="#fff"/><rect x="9" y="2" width="1" height="1" fill="#fff"/><rect x="10" y="2" width="1" height="1" fill="#fff"/><rect x="11" y="2" width="1" height="1" fill="#fff"/><rect x="12" y="2" width="1" height="1" fill="#fff"/><rect x="13" y="2" width="1" height="1" fill="#000"/><rect x="0" y="3" width="1" height="1" fill="#000"/><rect x="1" y="3" width="1" height="1" fill="#000"/><rect x="2" y="3" width="1" height="1" fill="#000"/><rect x="3" y="3" width="1" height="1" fill="#fff"/><rect x="4" y="3" width="1" height="1" fill="#fff"/><rect x="5" y="3" width="1" height="1" fill="#fff"/><rect x="6" y="3" width="1" height="1" fill="#fff"/><rect x="7" y="3" width="1" height="1" fill="#fff"/><rect x="8" y="3" width="1" height="1" fill="#fff"/><rect x="9" y="3" width="1" height="1" fill="#fff"/><rect x="10" y="3" width="1" height="1" fill="#fff"/><rect x="11" y="3" width="1" height="1" fill="#000"/><rect x="12" y="3" width="1" height="1" fill="#000"/><rect x="13" y="3" width="1" height="1" fill="#000"/><rect x="0" y="4" width="1" height="1" fill="#000"/><rect x="1" y="4" width="1" height="1" fill="#2a7878"/><rect x="2" y="4" width="1" height="1" fill="#2a7878"/><rect x="3" y="4" width="1" height="1" fill="#000"/><rect x="4" y="4" width="1" height="1" fill="#000"/><rect x="5" y="4" width="1" height="1" fill="#000"/><rect x="6" y="4" width="1" height="1" fill="#000"/><rect x="7" y="4" width="1" height="1" fill="#000"/><rect x="8" y="4" width="1" height="1" fill="#000"/><rect x="9" y="4" width="1" height="1" fill="#000"/><rect x="10" y="4" width="1" height="1" fill="#000"/><rect x="11" y="4" width="1" height="1" fill="#2a7878"/><rect x="12" y="4" width="1" height="1" fill="#2a7878"/><rect x="13" y="4" width="1" height="1" fill="#000"/><rect x="0" y="5" width="1" height="1" fill="#000"/><rect x="1" y="5" width="1" height="1" fill="#2a7878"/><rect x="2" y="5" width="1" height="1" fill="#2a7878"/><rect x="3" y="5" width="1" height="1" fill="#c0ffff"/><rect x="4" y="5" width="1" height="1" fill="#2a7878"/><rect x="5" y="5" width="1" height="1" fill="#2a7878"/><rect x="6" y="5" width="1" height="1" fill="#2a7878"/><rect x="7" y="5" width="1" height="1" fill="#2a7878"/><rect x="8" y="5" width="1" height="1" fill="#2a7878"/><rect x="9" y="5" width="1" height="1" fill="#2a7878"/><rect x="10" y="5" width="1" height="1" fill="#c0ffff"/><rect x="11" y="5" width="1" height="1" fill="#2a7878"/><rect x="12" y="5" width="1" height="1" fill="#2a7878"/><rect x="13" y="5" width="1" height="1" fill="#000"/><rect x="0" y="6" width="1" height="1" fill="#000"/><rect x="1" y="6" width="1" height="1" fill="#2a7878"/><rect x="2" y="6" width="1" height="1" fill="#2a7878"/><rect x="3" y="6" width="1" height="1" fill="#c0ffff"/><rect x="4" y="6" width="1" height="1" fill="#2a7878"/><rect x="5" y="6" width="1" height="1" fill="#2a7878"/><rect x="6" y="6" width="1" height="1" fill="#2a7878"/><rect x="7" y="6" width="1" height="1" fill="#2a7878"/><rect x="8" y="6" width="1" height="1" fill="#2a7878"/><rect x="9" y="6" width="1" height="1" fill="#2a7878"/><rect x="10" y="6" width="1" height="1" fill="#c0ffff"/><rect x="11" y="6" width="1" height="1" fill="#2a7878"/><rect x="12" y="6" width="1" height="1" fill="#2a7878"/><rect x="13" y="6" width="1" height="1" fill="#000"/><rect x="1" y="7" width="1" height="1" fill="#000"/><rect x="2" y="7" width="1" height="1" fill="#000"/><rect x="3" y="7" width="1" height="1" fill="#2a7878"/><rect x="4" y="7" width="1" height="1" fill="#2a7878"/><rect x="5" y="7" width="1" height="1" fill="#2a7878"/><rect x="6" y="7" width="1" height="1" fill="#2a7878"/><rect x="7" y="7" width="1" height="1" fill="#2a7878"/><rect x="8" y="7" width="1" height="1" fill="#2a7878"/><rect x="9" y="7" width="1" height="1" fill="#2a7878"/><rect x="10" y="7" width="1" height="1" fill="#2a7878"/><rect x="11" y="7" width="1" height="1" fill="#000"/><rect x="12" y="7" width="1" height="1" fill="#000"/><rect x="3" y="8" width="1" height="1" fill="#000"/><rect x="4" y="8" width="1" height="1" fill="#000"/><rect x="5" y="8" width="1" height="1" fill="#000"/><rect x="6" y="8" width="1" height="1" fill="#000"/><rect x="7" y="8" width="1" height="1" fill="#000"/><rect x="8" y="8" width="1" height="1" fill="#000"/><rect x="9" y="8" width="1" height="1" fill="#000"/><rect x="10" y="8" width="1" height="1" fill="#000"/></svg>
<div class="a" style="left:219px;top:421px;width:8px;height:1px;background:#000"></div>
<svg class="a" style="left:227px;top:418px" width="14" height="9" viewBox="0 0 14 9" shape-rendering="crispEdges"><rect x="3" y="0" width="1" height="1" fill="#000"/><rect x="4" y="0" width="1" height="1" fill="#000"/><rect x="5" y="0" width="1" height="1" fill="#000"/><rect x="6" y="0" width="1" height="1" fill="#000"/><rect x="7" y="0" width="1" height="1" fill="#000"/><rect x="8" y="0" width="1" height="1" fill="#000"/><rect x="9" y="0" width="1" height="1" fill="#000"/><rect x="10" y="0" width="1" height="1" fill="#000"/><rect x="1" y="1" width="1" height="1" fill="#000"/><rect x="2" y="1" width="1" height="1" fill="#000"/><rect x="3" y="1" width="1" height="1" fill="#fff"/><rect x="4" y="1" width="1" height="1" fill="#fff"/><rect x="5" y="1" width="1" height="1" fill="#fff"/><rect x="6" y="1" width="1" height="1" fill="#fff"/><rect x="7" y="1" width="1" height="1" fill="#fff"/><rect x="8" y="1" width="1" height="1" fill="#fff"/><rect x="9" y="1" width="1" height="1" fill="#fff"/><rect x="10" y="1" width="1" height="1" fill="#fff"/><rect x="11" y="1" width="1" height="1" fill="#000"/><rect x="12" y="1" width="1" height="1" fill="#000"/><rect x="0" y="2" width="1" height="1" fill="#000"/><rect x="1" y="2" width="1" height="1" fill="#fff"/><rect x="2" y="2" width="1" height="1" fill="#fff"/><rect x="3" y="2" width="1" height="1" fill="#fff"/><rect x="4" y="2" width="1" height="1" fill="#fff"/><rect x="5" y="2" width="1" height="1" fill="#fff"/><rect x="6" y="2" width="1" height="1" fill="#fff"/><rect x="7" y="2" width="1" height="1" fill="#fff"/><rect x="8" y="2" width="1" height="1" fill="#fff"/><rect x="9" y="2" width="1" height="1" fill="#fff"/><rect x="10" y="2" width="1" height="1" fill="#fff"/><rect x="11" y="2" width="1" height="1" fill="#fff"/><rect x="12" y="2" width="1" height="1" fill="#fff"/><rect x="13" y="2" width="1" height="1" fill="#000"/><rect x="0" y="3" width="1" height="1" fill="#000"/><rect x="1" y="3" width="1" height="1" fill="#000"/><rect x="2" y="3" width="1" height="1" fill="#000"/><rect x="3" y="3" width="1" height="1" fill="#fff"/><rect x="4" y="3" width="1" height="1" fill="#fff"/><rect x="5" y="3" width="1" height="1" fill="#fff"/><rect x="6" y="3" width="1" height="1" fill="#fff"/><rect x="7" y="3" width="1" height="1" fill="#fff"/><rect x="8" y="3" width="1" height="1" fill="#fff"/><rect x="9" y="3" width="1" height="1" fill="#fff"/><rect x="10" y="3" width="1" height="1" fill="#fff"/><rect x="11" y="3" width="1" height="1" fill="#000"/><rect x="12" y="3" width="1" height="1" fill="#000"/><rect x="13" y="3" width="1" height="1" fill="#000"/><rect x="0" y="4" width="1" height="1" fill="#000"/><rect x="1" y="4" width="1" height="1" fill="#2a7878"/><rect x="2" y="4" width="1" height="1" fill="#2a7878"/><rect x="3" y="4" width="1" height="1" fill="#000"/><rect x="4" y="4" width="1" height="1" fill="#000"/><rect x="5" y="4" width="1" height="1" fill="#000"/><rect x="6" y="4" width="1" height="1" fill="#000"/><rect x="7" y="4" width="1" height="1" fill="#000"/><rect x="8" y="4" width="1" height="1" fill="#000"/><rect x="9" y="4" width="1" height="1" fill="#000"/><rect x="10" y="4" width="1" height="1" fill="#000"/><rect x="11" y="4" width="1" height="1" fill="#2a7878"/><rect x="12" y="4" width="1" height="1" fill="#2a7878"/><rect x="13" y="4" width="1" height="1" fill="#000"/><rect x="0" y="5" width="1" height="1" fill="#000"/><rect x="1" y="5" width="1" height="1" fill="#2a7878"/><rect x="2" y="5" width="1" height="1" fill="#2a7878"/><rect x="3" y="5" width="1" height="1" fill="#c0ffff"/><rect x="4" y="5" width="1" height="1" fill="#2a7878"/><rect x="5" y="5" width="1" height="1" fill="#2a7878"/><rect x="6" y="5" width="1" height="1" fill="#2a7878"/><rect x="7" y="5" width="1" height="1" fill="#2a7878"/><rect x="8" y="5" width="1" height="1" fill="#2a7878"/><rect x="9" y="5" width="1" height="1" fill="#2a7878"/><rect x="10" y="5" width="1" height="1" fill="#c0ffff"/><rect x="11" y="5" width="1" height="1" fill="#2a7878"/><rect x="12" y="5" width="1" height="1" fill="#2a7878"/><rect x="13" y="5" width="1" height="1" fill="#000"/><rect x="0" y="6" width="1" height="1" fill="#000"/><rect x="1" y="6" width="1" height="1" fill="#2a7878"/><rect x="2" y="6" width="1" height="1" fill="#2a7878"/><rect x="3" y="6" width="1" height="1" fill="#c0ffff"/><rect x="4" y="6" width="1" height="1" fill="#2a7878"/><rect x="5" y="6" width="1" height="1" fill="#2a7878"/><rect x="6" y="6" width="1" height="1" fill="#2a7878"/><rect x="7" y="6" width="1" height="1" fill="#2a7878"/><rect x="8" y="6" width="1" height="1" fill="#2a7878"/><rect x="9" y="6" width="1" height="1" fill="#2a7878"/><rect x="10" y="6" width="1" height="1" fill="#c0ffff"/><rect x="11" y="6" width="1" height="1" fill="#2a7878"/><rect x="12" y="6" width="1" height="1" fill="#2a7878"/><rect x="13" y="6" width="1" height="1" fill="#000"/><rect x="1" y="7" width="1" height="1" fill="#000"/><rect x="2" y="7" width="1" height="1" fill="#000"/><rect x="3" y="7" width="1" height="1" fill="#2a7878"/><rect x="4" y="7" width="1" height="1" fill="#2a7878"/><rect x="5" y="7" width="1" height="1" fill="#2a7878"/><rect x="6" y="7" width="1" height="1" fill="#2a7878"/><rect x="7" y="7" width="1" height="1" fill="#2a7878"/><rect x="8" y="7" width="1" height="1" fill="#2a7878"/><rect x="9" y="7" width="1" height="1" fill="#2a7878"/><rect x="10" y="7" width="1" height="1" fill="#2a7878"/><rect x="11" y="7" width="1" height="1" fill="#000"/><rect x="12" y="7" width="1" height="1" fill="#000"/><rect x="3" y="8" width="1" height="1" fill="#000"/><rect x="4" y="8" width="1" height="1" fill="#000"/><rect x="5" y="8" width="1" height="1" fill="#000"/><rect x="6" y="8" width="1" height="1" fill="#000"/><rect x="7" y="8" width="1" height="1" fill="#000"/><rect x="8" y="8" width="1" height="1" fill="#000"/><rect x="9" y="8" width="1" height="1" fill="#000"/><rect x="10" y="8" width="1" height="1" fill="#000"/></svg>
<div class="a" style="left:219px;top:442px;width:8px;height:1px;background:#000"></div>
<svg class="a" style="left:227px;top:439px" width="14" height="9" viewBox="0 0 14 9" shape-rendering="crispEdges"><rect x="3" y="0" width="1" height="1" fill="#000"/><rect x="4" y="0" width="1" height="1" fill="#000"/><rect x="5" y="0" width="1" height="1" fill="#000"/><rect x="6" y="0" width="1" height="1" fill="#000"/><rect x="7" y="0" width="1" height="1" fill="#000"/><rect x="8" y="0" width="1" height="1" fill="#000"/><rect x="9" y="0" width="1" height="1" fill="#000"/><rect x="10" y="0" width="1" height="1" fill="#000"/><rect x="1" y="1" width="1" height="1" fill="#000"/><rect x="2" y="1" width="1" height="1" fill="#000"/><rect x="3" y="1" width="1" height="1" fill="#fff"/><rect x="4" y="1" width="1" height="1" fill="#fff"/><rect x="5" y="1" width="1" height="1" fill="#fff"/><rect x="6" y="1" width="1" height="1" fill="#fff"/><rect x="7" y="1" width="1" height="1" fill="#fff"/><rect x="8" y="1" width="1" height="1" fill="#fff"/><rect x="9" y="1" width="1" height="1" fill="#fff"/><rect x="10" y="1" width="1" height="1" fill="#fff"/><rect x="11" y="1" width="1" height="1" fill="#000"/><rect x="12" y="1" width="1" height="1" fill="#000"/><rect x="0" y="2" width="1" height="1" fill="#000"/><rect x="1" y="2" width="1" height="1" fill="#fff"/><rect x="2" y="2" width="1" height="1" fill="#fff"/><rect x="3" y="2" width="1" height="1" fill="#fff"/><rect x="4" y="2" width="1" height="1" fill="#fff"/><rect x="5" y="2" width="1" height="1" fill="#fff"/><rect x="6" y="2" width="1" height="1" fill="#fff"/><rect x="7" y="2" width="1" height="1" fill="#fff"/><rect x="8" y="2" width="1" height="1" fill="#fff"/><rect x="9" y="2" width="1" height="1" fill="#fff"/><rect x="10" y="2" width="1" height="1" fill="#fff"/><rect x="11" y="2" width="1" height="1" fill="#fff"/><rect x="12" y="2" width="1" height="1" fill="#fff"/><rect x="13" y="2" width="1" height="1" fill="#000"/><rect x="0" y="3" width="1" height="1" fill="#000"/><rect x="1" y="3" width="1" height="1" fill="#000"/><rect x="2" y="3" width="1" height="1" fill="#000"/><rect x="3" y="3" width="1" height="1" fill="#fff"/><rect x="4" y="3" width="1" height="1" fill="#fff"/><rect x="5" y="3" width="1" height="1" fill="#fff"/><rect x="6" y="3" width="1" height="1" fill="#fff"/><rect x="7" y="3" width="1" height="1" fill="#fff"/><rect x="8" y="3" width="1" height="1" fill="#fff"/><rect x="9" y="3" width="1" height="1" fill="#fff"/><rect x="10" y="3" width="1" height="1" fill="#fff"/><rect x="11" y="3" width="1" height="1" fill="#000"/><rect x="12" y="3" width="1" height="1" fill="#000"/><rect x="13" y="3" width="1" height="1" fill="#000"/><rect x="0" y="4" width="1" height="1" fill="#000"/><rect x="1" y="4" width="1" height="1" fill="#2a7878"/><rect x="2" y="4" width="1" height="1" fill="#2a7878"/><rect x="3" y="4" width="1" height="1" fill="#000"/><rect x="4" y="4" width="1" height="1" fill="#000"/><rect x="5" y="4" width="1" height="1" fill="#000"/><rect x="6" y="4" width="1" height="1" fill="#000"/><rect x="7" y="4" width="1" height="1" fill="#000"/><rect x="8" y="4" width="1" height="1" fill="#000"/><rect x="9" y="4" width="1" height="1" fill="#000"/><rect x="10" y="4" width="1" height="1" fill="#000"/><rect x="11" y="4" width="1" height="1" fill="#2a7878"/><rect x="12" y="4" width="1" height="1" fill="#2a7878"/><rect x="13" y="4" width="1" height="1" fill="#000"/><rect x="0" y="5" width="1" height="1" fill="#000"/><rect x="1" y="5" width="1" height="1" fill="#2a7878"/><rect x="2" y="5" width="1" height="1" fill="#2a7878"/><rect x="3" y="5" width="1" height="1" fill="#c0ffff"/><rect x="4" y="5" width="1" height="1" fill="#2a7878"/><rect x="5" y="5" width="1" height="1" fill="#2a7878"/><rect x="6" y="5" width="1" height="1" fill="#2a7878"/><rect x="7" y="5" width="1" height="1" fill="#2a7878"/><rect x="8" y="5" width="1" height="1" fill="#2a7878"/><rect x="9" y="5" width="1" height="1" fill="#2a7878"/><rect x="10" y="5" width="1" height="1" fill="#c0ffff"/><rect x="11" y="5" width="1" height="1" fill="#2a7878"/><rect x="12" y="5" width="1" height="1" fill="#2a7878"/><rect x="13" y="5" width="1" height="1" fill="#000"/><rect x="0" y="6" width="1" height="1" fill="#000"/><rect x="1" y="6" width="1" height="1" fill="#2a7878"/><rect x="2" y="6" width="1" height="1" fill="#2a7878"/><rect x="3" y="6" width="1" height="1" fill="#c0ffff"/><rect x="4" y="6" width="1" height="1" fill="#2a7878"/><rect x="5" y="6" width="1" height="1" fill="#2a7878"/><rect x="6" y="6" width="1" height="1" fill="#2a7878"/><rect x="7" y="6" width="1" height="1" fill="#2a7878"/><rect x="8" y="6" width="1" height="1" fill="#2a7878"/><rect x="9" y="6" width="1" height="1" fill="#2a7878"/><rect x="10" y="6" width="1" height="1" fill="#c0ffff"/><rect x="11" y="6" width="1" height="1" fill="#2a7878"/><rect x="12" y="6" width="1" height="1" fill="#2a7878"/><rect x="13" y="6" width="1" height="1" fill="#000"/><rect x="1" y="7" width="1" height="1" fill="#000"/><rect x="2" y="7" width="1" height="1" fill="#000"/><rect x="3" y="7" width="1" height="1" fill="#2a7878"/><rect x="4" y="7" width="1" height="1" fill="#2a7878"/><rect x="5" y="7" width="1" height="1" fill="#2a7878"/><rect x="6" y="7" width="1" height="1" fill="#2a7878"/><rect x="7" y="7" width="1" height="1" fill="#2a7878"/><rect x="8" y="7" width="1" height="1" fill="#2a7878"/><rect x="9" y="7" width="1" height="1" fill="#2a7878"/><rect x="10" y="7" width="1" height="1" fill="#2a7878"/><rect x="11" y="7" width="1" height="1" fill="#000"/><rect x="12" y="7" width="1" height="1" fill="#000"/><rect x="3" y="8" width="1" height="1" fill="#000"/><rect x="4" y="8" width="1" height="1" fill="#000"/><rect x="5" y="8" width="1" height="1" fill="#000"/><rect x="6" y="8" width="1" height="1" fill="#000"/><rect x="7" y="8" width="1" height="1" fill="#000"/><rect x="8" y="8" width="1" height="1" fill="#000"/><rect x="9" y="8" width="1" height="1" fill="#000"/><rect x="10" y="8" width="1" height="1" fill="#000"/></svg>
<div class="a" style="left:219px;top:463px;width:8px;height:1px;background:#000"></div>
<svg class="a" style="left:227px;top:460px" width="14" height="9" viewBox="0 0 14 9" shape-rendering="crispEdges"><rect x="3" y="0" width="1" height="1" fill="#000"/><rect x="4" y="0" width="1" height="1" fill="#000"/><rect x="5" y="0" width="1" height="1" fill="#000"/><rect x="6" y="0" width="1" height="1" fill="#000"/><rect x="7" y="0" width="1" height="1" fill="#000"/><rect x="8" y="0" width="1" height="1" fill="#000"/><rect x="9" y="0" width="1" height="1" fill="#000"/><rect x="10" y="0" width="1" height="1" fill="#000"/><rect x="1" y="1" width="1" height="1" fill="#000"/><rect x="2" y="1" width="1" height="1" fill="#000"/><rect x="3" y="1" width="1" height="1" fill="#fff"/><rect x="4" y="1" width="1" height="1" fill="#fff"/><rect x="5" y="1" width="1" height="1" fill="#fff"/><rect x="6" y="1" width="1" height="1" fill="#fff"/><rect x="7" y="1" width="1" height="1" fill="#fff"/><rect x="8" y="1" width="1" height="1" fill="#fff"/><rect x="9" y="1" width="1" height="1" fill="#fff"/><rect x="10" y="1" width="1" height="1" fill="#fff"/><rect x="11" y="1" width="1" height="1" fill="#000"/><rect x="12" y="1" width="1" height="1" fill="#000"/><rect x="0" y="2" width="1" height="1" fill="#000"/><rect x="1" y="2" width="1" height="1" fill="#fff"/><rect x="2" y="2" width="1" height="1" fill="#fff"/><rect x="3" y="2" width="1" height="1" fill="#fff"/><rect x="4" y="2" width="1" height="1" fill="#fff"/><rect x="5" y="2" width="1" height="1" fill="#fff"/><rect x="6" y="2" width="1" height="1" fill="#fff"/><rect x="7" y="2" width="1" height="1" fill="#fff"/><rect x="8" y="2" width="1" height="1" fill="#fff"/><rect x="9" y="2" width="1" height="1" fill="#fff"/><rect x="10" y="2" width="1" height="1" fill="#fff"/><rect x="11" y="2" width="1" height="1" fill="#fff"/><rect x="12" y="2" width="1" height="1" fill="#fff"/><rect x="13" y="2" width="1" height="1" fill="#000"/><rect x="0" y="3" width="1" height="1" fill="#000"/><rect x="1" y="3" width="1" height="1" fill="#000"/><rect x="2" y="3" width="1" height="1" fill="#000"/><rect x="3" y="3" width="1" height="1" fill="#fff"/><rect x="4" y="3" width="1" height="1" fill="#fff"/><rect x="5" y="3" width="1" height="1" fill="#fff"/><rect x="6" y="3" width="1" height="1" fill="#fff"/><rect x="7" y="3" width="1" height="1" fill="#fff"/><rect x="8" y="3" width="1" height="1" fill="#fff"/><rect x="9" y="3" width="1" height="1" fill="#fff"/><rect x="10" y="3" width="1" height="1" fill="#fff"/><rect x="11" y="3" width="1" height="1" fill="#000"/><rect x="12" y="3" width="1" height="1" fill="#000"/><rect x="13" y="3" width="1" height="1" fill="#000"/><rect x="0" y="4" width="1" height="1" fill="#000"/><rect x="1" y="4" width="1" height="1" fill="#2a7878"/><rect x="2" y="4" width="1" height="1" fill="#2a7878"/><rect x="3" y="4" width="1" height="1" fill="#000"/><rect x="4" y="4" width="1" height="1" fill="#000"/><rect x="5" y="4" width="1" height="1" fill="#000"/><rect x="6" y="4" width="1" height="1" fill="#000"/><rect x="7" y="4" width="1" height="1" fill="#000"/><rect x="8" y="4" width="1" height="1" fill="#000"/><rect x="9" y="4" width="1" height="1" fill="#000"/><rect x="10" y="4" width="1" height="1" fill="#000"/><rect x="11" y="4" width="1" height="1" fill="#2a7878"/><rect x="12" y="4" width="1" height="1" fill="#2a7878"/><rect x="13" y="4" width="1" height="1" fill="#000"/><rect x="0" y="5" width="1" height="1" fill="#000"/><rect x="1" y="5" width="1" height="1" fill="#2a7878"/><rect x="2" y="5" width="1" height="1" fill="#2a7878"/><rect x="3" y="5" width="1" height="1" fill="#c0ffff"/><rect x="4" y="5" width="1" height="1" fill="#2a7878"/><rect x="5" y="5" width="1" height="1" fill="#2a7878"/><rect x="6" y="5" width="1" height="1" fill="#2a7878"/><rect x="7" y="5" width="1" height="1" fill="#2a7878"/><rect x="8" y="5" width="1" height="1" fill="#2a7878"/><rect x="9" y="5" width="1" height="1" fill="#2a7878"/><rect x="10" y="5" width="1" height="1" fill="#c0ffff"/><rect x="11" y="5" width="1" height="1" fill="#2a7878"/><rect x="12" y="5" width="1" height="1" fill="#2a7878"/><rect x="13" y="5" width="1" height="1" fill="#000"/><rect x="0" y="6" width="1" height="1" fill="#000"/><rect x="1" y="6" width="1" height="1" fill="#2a7878"/><rect x="2" y="6" width="1" height="1" fill="#2a7878"/><rect x="3" y="6" width="1" height="1" fill="#c0ffff"/><rect x="4" y="6" width="1" height="1" fill="#2a7878"/><rect x="5" y="6" width="1" height="1" fill="#2a7878"/><rect x="6" y="6" width="1" height="1" fill="#2a7878"/><rect x="7" y="6" width="1" height="1" fill="#2a7878"/><rect x="8" y="6" width="1" height="1" fill="#2a7878"/><rect x="9" y="6" width="1" height="1" fill="#2a7878"/><rect x="10" y="6" width="1" height="1" fill="#c0ffff"/><rect x="11" y="6" width="1" height="1" fill="#2a7878"/><rect x="12" y="6" width="1" height="1" fill="#2a7878"/><rect x="13" y="6" width="1" height="1" fill="#000"/><rect x="1" y="7" width="1" height="1" fill="#000"/><rect x="2" y="7" width="1" height="1" fill="#000"/><rect x="3" y="7" width="1" height="1" fill="#2a7878"/><rect x="4" y="7" width="1" height="1" fill="#2a7878"/><rect x="5" y="7" width="1" height="1" fill="#2a7878"/><rect x="6" y="7" width="1" height="1" fill="#2a7878"/><rect x="7" y="7" width="1" height="1" fill="#2a7878"/><rect x="8" y="7" width="1" height="1" fill="#2a7878"/><rect x="9" y="7" width="1" height="1" fill="#2a7878"/><rect x="10" y="7" width="1" height="1" fill="#2a7878"/><rect x="11" y="7" width="1" height="1" fill="#000"/><rect x="12" y="7" width="1" height="1" fill="#000"/><rect x="3" y="8" width="1" height="1" fill="#000"/><rect x="4" y="8" width="1" height="1" fill="#000"/><rect x="5" y="8" width="1" height="1" fill="#000"/><rect x="6" y="8" width="1" height="1" fill="#000"/><rect x="7" y="8" width="1" height="1" fill="#000"/><rect x="8" y="8" width="1" height="1" fill="#000"/><rect x="9" y="8" width="1" height="1" fill="#000"/><rect x="10" y="8" width="1" height="1" fill="#000"/></svg>
<div class="a" style="left:219px;top:484px;width:8px;height:1px;background:#000"></div>
<svg class="a" style="left:227px;top:481px" width="14" height="9" viewBox="0 0 14 9" shape-rendering="crispEdges"><rect x="3" y="0" width="1" height="1" fill="#000"/><rect x="4" y="0" width="1" height="1" fill="#000"/><rect x="5" y="0" width="1" height="1" fill="#000"/><rect x="6" y="0" width="1" height="1" fill="#000"/><rect x="7" y="0" width="1" height="1" fill="#000"/><rect x="8" y="0" width="1" height="1" fill="#000"/><rect x="9" y="0" width="1" height="1" fill="#000"/><rect x="10" y="0" width="1" height="1" fill="#000"/><rect x="1" y="1" width="1" height="1" fill="#000"/><rect x="2" y="1" width="1" height="1" fill="#000"/><rect x="3" y="1" width="1" height="1" fill="#fff"/><rect x="4" y="1" width="1" height="1" fill="#fff"/><rect x="5" y="1" width="1" height="1" fill="#fff"/><rect x="6" y="1" width="1" height="1" fill="#fff"/><rect x="7" y="1" width="1" height="1" fill="#fff"/><rect x="8" y="1" width="1" height="1" fill="#fff"/><rect x="9" y="1" width="1" height="1" fill="#fff"/><rect x="10" y="1" width="1" height="1" fill="#fff"/><rect x="11" y="1" width="1" height="1" fill="#000"/><rect x="12" y="1" width="1" height="1" fill="#000"/><rect x="0" y="2" width="1" height="1" fill="#000"/><rect x="1" y="2" width="1" height="1" fill="#fff"/><rect x="2" y="2" width="1" height="1" fill="#fff"/><rect x="3" y="2" width="1" height="1" fill="#fff"/><rect x="4" y="2" width="1" height="1" fill="#fff"/><rect x="5" y="2" width="1" height="1" fill="#fff"/><rect x="6" y="2" width="1" height="1" fill="#fff"/><rect x="7" y="2" width="1" height="1" fill="#fff"/><rect x="8" y="2" width="1" height="1" fill="#fff"/><rect x="9" y="2" width="1" height="1" fill="#fff"/><rect x="10" y="2" width="1" height="1" fill="#fff"/><rect x="11" y="2" width="1" height="1" fill="#fff"/><rect x="12" y="2" width="1" height="1" fill="#fff"/><rect x="13" y="2" width="1" height="1" fill="#000"/><rect x="0" y="3" width="1" height="1" fill="#000"/><rect x="1" y="3" width="1" height="1" fill="#000"/><rect x="2" y="3" width="1" height="1" fill="#000"/><rect x="3" y="3" width="1" height="1" fill="#fff"/><rect x="4" y="3" width="1" height="1" fill="#fff"/><rect x="5" y="3" width="1" height="1" fill="#fff"/><rect x="6" y="3" width="1" height="1" fill="#fff"/><rect x="7" y="3" width="1" height="1" fill="#fff"/><rect x="8" y="3" width="1" height="1" fill="#fff"/><rect x="9" y="3" width="1" height="1" fill="#fff"/><rect x="10" y="3" width="1" height="1" fill="#fff"/><rect x="11" y="3" width="1" height="1" fill="#000"/><rect x="12" y="3" width="1" height="1" fill="#000"/><rect x="13" y="3" width="1" height="1" fill="#000"/><rect x="0" y="4" width="1" height="1" fill="#000"/><rect x="1" y="4" width="1" height="1" fill="#2a7878"/><rect x="2" y="4" width="1" height="1" fill="#2a7878"/><rect x="3" y="4" width="1" height="1" fill="#000"/><rect x="4" y="4" width="1" height="1" fill="#000"/><rect x="5" y="4" width="1" height="1" fill="#000"/><rect x="6" y="4" width="1" height="1" fill="#000"/><rect x="7" y="4" width="1" height="1" fill="#000"/><rect x="8" y="4" width="1" height="1" fill="#000"/><rect x="9" y="4" width="1" height="1" fill="#000"/><rect x="10" y="4" width="1" height="1" fill="#000"/><rect x="11" y="4" width="1" height="1" fill="#2a7878"/><rect x="12" y="4" width="1" height="1" fill="#2a7878"/><rect x="13" y="4" width="1" height="1" fill="#000"/><rect x="0" y="5" width="1" height="1" fill="#000"/><rect x="1" y="5" width="1" height="1" fill="#2a7878"/><rect x="2" y="5" width="1" height="1" fill="#2a7878"/><rect x="3" y="5" width="1" height="1" fill="#c0ffff"/><rect x="4" y="5" width="1" height="1" fill="#2a7878"/><rect x="5" y="5" width="1" height="1" fill="#2a7878"/><rect x="6" y="5" width="1" height="1" fill="#2a7878"/><rect x="7" y="5" width="1" height="1" fill="#2a7878"/><rect x="8" y="5" width="1" height="1" fill="#2a7878"/><rect x="9" y="5" width="1" height="1" fill="#2a7878"/><rect x="10" y="5" width="1" height="1" fill="#c0ffff"/><rect x="11" y="5" width="1" height="1" fill="#2a7878"/><rect x="12" y="5" width="1" height="1" fill="#2a7878"/><rect x="13" y="5" width="1" height="1" fill="#000"/><rect x="0" y="6" width="1" height="1" fill="#000"/><rect x="1" y="6" width="1" height="1" fill="#2a7878"/><rect x="2" y="6" width="1" height="1" fill="#2a7878"/><rect x="3" y="6" width="1" height="1" fill="#c0ffff"/><rect x="4" y="6" width="1" height="1" fill="#2a7878"/><rect x="5" y="6" width="1" height="1" fill="#2a7878"/><rect x="6" y="6" width="1" height="1" fill="#2a7878"/><rect x="7" y="6" width="1" height="1" fill="#2a7878"/><rect x="8" y="6" width="1" height="1" fill="#2a7878"/><rect x="9" y="6" width="1" height="1" fill="#2a7878"/><rect x="10" y="6" width="1" height="1" fill="#c0ffff"/><rect x="11" y="6" width="1" height="1" fill="#2a7878"/><rect x="12" y="6" width="1" height="1" fill="#2a7878"/><rect x="13" y="6" width="1" height="1" fill="#000"/><rect x="1" y="7" width="1" height="1" fill="#000"/><rect x="2" y="7" width="1" height="1" fill="#000"/><rect x="3" y="7" width="1" height="1" fill="#2a7878"/><rect x="4" y="7" width="1" height="1" fill="#2a7878"/><rect x="5" y="7" width="1" height="1" fill="#2a7878"/><rect x="6" y="7" width="1" height="1" fill="#2a7878"/><rect x="7" y="7" width="1" height="1" fill="#2a7878"/><rect x="8" y="7" width="1" height="1" fill="#2a7878"/><rect x="9" y="7" width="1" height="1" fill="#2a7878"/><rect x="10" y="7" width="1" height="1" fill="#2a7878"/><rect x="11" y="7" width="1" height="1" fill="#000"/><rect x="12" y="7" width="1" height="1" fill="#000"/><rect x="3" y="8" width="1" height="1" fill="#000"/><rect x="4" y="8" width="1" height="1" fill="#000"/><rect x="5" y="8" width="1" height="1" fill="#000"/><rect x="6" y="8" width="1" height="1" fill="#000"/><rect x="7" y="8" width="1" height="1" fill="#000"/><rect x="8" y="8" width="1" height="1" fill="#000"/><rect x="9" y="8" width="1" height="1" fill="#000"/><rect x="10" y="8" width="1" height="1" fill="#000"/></svg>
<svg class="a" style="left:182px;top:291px" width="23" height="14" viewBox="0 0 23 14" shape-rendering="crispEdges"><path d="M0 0 H1 V1 H2 V11 H1 V1 H0Z" fill="#000"/><rect x="1" y="2" width="22" height="10" fill="#000"/><rect x="2" y="3" width="20" height="8" fill="#1a8a3a"/><rect x="3" y="4" width="2" height="1" fill="#9fd"/><rect x="7" y="4" width="3" height="2" fill="#6cb"/><rect x="12" y="4" width="2" height="1" fill="#dff"/><rect x="16" y="4" width="3" height="2" fill="#4a6"/><rect x="3" y="7" width="4" height="2" fill="#2a6a4a"/><rect x="9" y="8" width="6" height="2" fill="#cfa"/><rect x="17" y="7" width="3" height="3" fill="#8cf"/><rect x="3" y="12" width="9" height="2" fill="#c8a030"/><rect x="4" y="12" width="1" height="2" fill="#604010"/><rect x="7" y="12" width="1" height="2" fill="#604010"/><rect x="10" y="12" width="1" height="2" fill="#604010"/></svg>
<svg class="a" style="left:202px;top:307px" width="13" height="18" viewBox="0 0 13 18"><path d="M0 3 L3 0 H12 V15 L9 18 H0 Z" fill="#222"/><rect x="0" y="2" width="9" height="16" fill="#b4b4b4"/><path d="M1 4 h7 M1 7 h6 M2 10 h6 M1 13 h7" stroke="#d8d8d8" stroke-width="1" opacity=".7"/><path d="M0 2 L2.5 0 H12 L9 2 Z" fill="#555"/></svg>
<svg class="a" style="left:211px;top:329px" width="16" height="19" viewBox="0 0 16 19"><path d="M1 4.5 L6 1 L11 1.5 L14 7 L15 15 L10 18.5 L5 18 L2 13 L0.5 7 Z" fill="#7a8a26"/><path d="M3 6 L7 3 L10 5 L11 10 L8 14 L4 12 Z" fill="#9aaa40"/><ellipse cx="8" cy="5.5" rx="3" ry="2.6" fill="#d8dcc4"/><path d="M6 8 Q8 9 10 7.5" stroke="#303010" stroke-width="1" fill="none"/><circle cx="2.5" cy="4.5" r="1.2" fill="#202010"/><path d="M11 8.5 L15 10 L15.2 16 L10.5 18.5 L9.5 13 Z" fill="#0a0a0a"/><ellipse cx="6.5" cy="16" rx="1.6" ry="1" fill="#c8d0a8"/></svg>
<svg class="a" style="left:215px;top:497px" width="15" height="17" viewBox="0 0 15 17"><path d="M7 8.5 L3.5 4.5 M7 8.5 L9.5 3.5 M7 8.5 L12.5 8.5 M7 8.5 L4.5 13 M7 8.5 L10.5 13" stroke="#701800" stroke-width="1"/><path d="M3.5 2.1 L5.9 4.5 L3.5 6.9 L1.1 4.5 Z M9.5 0.8999999999999999 L12.1 3.5 L9.5 6.1 L6.9 3.5 Z M12.5 6.2 L14.8 8.5 L12.5 10.8 L10.2 8.5 Z M4.5 10.4 L7.1 13 L4.5 15.6 L1.9 13 Z M10.5 10.6 L12.9 13 L10.5 15.4 L8.1 13 Z " fill="#3424e0" stroke="#2010a0" stroke-width=".5"/><circle cx="7" cy="8.5" r="1.3" fill="#802000"/></svg>
<div class="a" style="left:190px;top:516px;width:1px;height:12px;background:#000"></div>
<div class="a" style="left:190px;top:527px;width:12px;height:1px;background:#000"></div>
<svg class="a" style="left:202px;top:517px" width="13" height="18" viewBox="0 0 13 18"><path d="M0 3 L3 0 H12 V15 L9 18 H0 Z" fill="#222"/><rect x="0" y="2" width="9" height="16" fill="#b4b4b4"/><path d="M1 4 h7 M1 7 h6 M2 10 h6 M1 13 h7" stroke="#d8d8d8" stroke-width="1" opacity=".7"/><path d="M0 2 L2.5 0 H12 L9 2 Z" fill="#555"/></svg>
<div class="a" style="left:206px;top:535px;width:1px;height:40px;background:#000"></div>
<div class="a" style="left:206px;top:547px;width:5px;height:1px;background:#000"></div>
<svg class="a" style="left:211px;top:539px" width="16" height="19" viewBox="0 0 16 19"><path d="M1 4.5 L6 1 L11 1.5 L14 7 L15 15 L10 18.5 L5 18 L2 13 L0.5 7 Z" fill="#7a8a26"/><path d="M3 6 L7 3 L10 5 L11 10 L8 14 L4 12 Z" fill="#9aaa40"/><ellipse cx="8" cy="5.5" rx="3" ry="2.6" fill="#d8dcc4"/><path d="M6 8 Q8 9 10 7.5" stroke="#303010" stroke-width="1" fill="none"/><circle cx="2.5" cy="4.5" r="1.2" fill="#202010"/><path d="M11 8.5 L15 10 L15.2 16 L10.5 18.5 L9.5 13 Z" fill="#0a0a0a"/><ellipse cx="6.5" cy="16" rx="1.6" ry="1" fill="#c8d0a8"/></svg>
<div class="a" style="left:219px;top:557px;width:1px;height:18px;background:#000"></div>
<div class="a" style="left:219px;top:568px;width:8px;height:1px;background:#000"></div>
<svg class="a" style="left:227px;top:565px" width="14" height="9" viewBox="0 0 14 9" shape-rendering="crispEdges"><rect x="3" y="0" width="1" height="1" fill="#000"/><rect x="4" y="0" width="1" height="1" fill="#000"/><rect x="5" y="0" width="1" height="1" fill="#000"/><rect x="6" y="0" width="1" height="1" fill="#000"/><rect x="7" y="0" width="1" height="1" fill="#000"/><rect x="8" y="0" width="1" height="1" fill="#000"/><rect x="9" y="0" width="1" height="1" fill="#000"/><rect x="10" y="0" width="1" height="1" fill="#000"/><rect x="1" y="1" width="1" height="1" fill="#000"/><rect x="2" y="1" width="1" height="1" fill="#000"/><rect x="3" y="1" width="1" height="1" fill="#fff"/><rect x="4" y="1" width="1" height="1" fill="#fff"/><rect x="5" y="1" width="1" height="1" fill="#fff"/><rect x="6" y="1" width="1" height="1" fill="#fff"/><rect x="7" y="1" width="1" height="1" fill="#fff"/><rect x="8" y="1" width="1" height="1" fill="#fff"/><rect x="9" y="1" width="1" height="1" fill="#fff"/><rect x="10" y="1" width="1" height="1" fill="#fff"/><rect x="11" y="1" width="1" height="1" fill="#000"/><rect x="12" y="1" width="1" height="1" fill="#000"/><rect x="0" y="2" width="1" height="1" fill="#000"/><rect x="1" y="2" width="1" height="1" fill="#fff"/><rect x="2" y="2" width="1" height="1" fill="#fff"/><rect x="3" y="2" width="1" height="1" fill="#fff"/><rect x="4" y="2" width="1" height="1" fill="#fff"/><rect x="5" y="2" width="1" height="1" fill="#fff"/><rect x="6" y="2" width="1" height="1" fill="#fff"/><rect x="7" y="2" width="1" height="1" fill="#fff"/><rect x="8" y="2" width="1" height="1" fill="#fff"/><rect x="9" y="2" width="1" height="1" fill="#fff"/><rect x="10" y="2" width="1" height="1" fill="#fff"/><rect x="11" y="2" width="1" height="1" fill="#fff"/><rect x="12" y="2" width="1" height="1" fill="#fff"/><rect x="13" y="2" width="1" height="1" fill="#000"/><rect x="0" y="3" width="1" height="1" fill="#000"/><rect x="1" y="3" width="1" height="1" fill="#000"/><rect x="2" y="3" width="1" height="1" fill="#000"/><rect x="3" y="3" width="1" height="1" fill="#fff"/><rect x="4" y="3" width="1" height="1" fill="#fff"/><rect x="5" y="3" width="1" height="1" fill="#fff"/><rect x="6" y="3" width="1" height="1" fill="#fff"/><rect x="7" y="3" width="1" height="1" fill="#fff"/><rect x="8" y="3" width="1" height="1" fill="#fff"/><rect x="9" y="3" width="1" height="1" fill="#fff"/><rect x="10" y="3" width="1" height="1" fill="#fff"/><rect x="11" y="3" width="1" height="1" fill="#000"/><rect x="12" y="3" width="1" height="1" fill="#000"/><rect x="13" y="3" width="1" height="1" fill="#000"/><rect x="0" y="4" width="1" height="1" fill="#000"/><rect x="1" y="4" width="1" height="1" fill="#20b050"/><rect x="2" y="4" width="1" height="1" fill="#20b050"/><rect x="3" y="4" width="1" height="1" fill="#000"/><rect x="4" y="4" width="1" height="1" fill="#000"/><rect x="5" y="4" width="1" height="1" fill="#000"/><rect x="6" y="4" width="1" height="1" fill="#000"/><rect x="7" y="4" width="1" height="1" fill="#000"/><rect x="8" y="4" width="1" height="1" fill="#000"/><rect x="9" y="4" width="1" height="1" fill="#000"/><rect x="10" y="4" width="1" height="1" fill="#000"/><rect x="11" y="4" width="1" height="1" fill="#20b050"/><rect x="12" y="4" width="1" height="1" fill="#20b050"/><rect x="13" y="4" width="1" height="1" fill="#000"/><rect x="0" y="5" width="1" height="1" fill="#000"/><rect x="1" y="5" width="1" height="1" fill="#20b050"/><rect x="2" y="5" width="1" height="1" fill="#20b050"/><rect x="3" y="5" width="1" height="1" fill="#a0ffc0"/><rect x="4" y="5" width="1" height="1" fill="#20b050"/><rect x="5" y="5" width="1" height="1" fill="#20b050"/><rect x="6" y="5" width="1" height="1" fill="#20b050"/><rect x="7" y="5" width="1" height="1" fill="#20b050"/><rect x="8" y="5" width="1" height="1" fill="#20b050"/><rect x="9" y="5" width="1" height="1" fill="#20b050"/><rect x="10" y="5" width="1" height="1" fill="#a0ffc0"/><rect x="11" y="5" width="1" height="1" fill="#20b050"/><rect x="12" y="5" width="1" height="1" fill="#20b050"/><rect x="13" y="5" width="1" height="1" fill="#000"/><rect x="0" y="6" width="1" height="1" fill="#000"/><rect x="1" y="6" width="1" height="1" fill="#20b050"/><rect x="2" y="6" width="1" height="1" fill="#20b050"/><rect x="3" y="6" width="1" height="1" fill="#a0ffc0"/><rect x="4" y="6" width="1" height="1" fill="#20b050"/><rect x="5" y="6" width="1" height="1" fill="#20b050"/><rect x="6" y="6" width="1" height="1" fill="#20b050"/><rect x="7" y="6" width="1" height="1" fill="#20b050"/><rect x="8" y="6" width="1" height="1" fill="#20b050"/><rect x="9" y="6" width="1" height="1" fill="#20b050"/><rect x="10" y="6" width="1" height="1" fill="#a0ffc0"/><rect x="11" y="6" width="1" height="1" fill="#20b050"/><rect x="12" y="6" width="1" height="1" fill="#20b050"/><rect x="13" y="6" width="1" height="1" fill="#000"/><rect x="1" y="7" width="1" height="1" fill="#000"/><rect x="2" y="7" width="1" height="1" fill="#000"/><rect x="3" y="7" width="1" height="1" fill="#20b050"/><rect x="4" y="7" width="1" height="1" fill="#20b050"/><rect x="5" y="7" width="1" height="1" fill="#20b050"/><rect x="6" y="7" width="1" height="1" fill="#20b050"/><rect x="7" y="7" width="1" height="1" fill="#20b050"/><rect x="8" y="7" width="1" height="1" fill="#20b050"/><rect x="9" y="7" width="1" height="1" fill="#20b050"/><rect x="10" y="7" width="1" height="1" fill="#20b050"/><rect x="11" y="7" width="1" height="1" fill="#000"/><rect x="12" y="7" width="1" height="1" fill="#000"/><rect x="3" y="8" width="1" height="1" fill="#000"/><rect x="4" y="8" width="1" height="1" fill="#000"/><rect x="5" y="8" width="1" height="1" fill="#000"/><rect x="6" y="8" width="1" height="1" fill="#000"/><rect x="7" y="8" width="1" height="1" fill="#000"/><rect x="8" y="8" width="1" height="1" fill="#000"/><rect x="9" y="8" width="1" height="1" fill="#000"/><rect x="10" y="8" width="1" height="1" fill="#000"/></svg></div>

<!-- props table -->
<div class="a" style="left:166px;top:736px;width:328px;height:44px;border-top:1px solid #c8c8c8;border-left:1px solid #c8c8c8;border-right:1px solid #808080;border-bottom:1px solid #808080;background:#fff"></div>
<div class="a" style="left:167px;top:737px;width:126px;height:20px;background:#2d5e92;border-right:1px solid #8fa0b8"></div>
<div class="a" style="left:295px;top:737px;width:124px;height:20px;background:#2d5e92;border-right:1px solid #8fa0b8;border-left:1px solid #607080"></div>
<div class="a" style="left:421px;top:737px;width:72px;height:20px;background:#2d5e92;border-left:1px solid #607080"></div>
<div class="a" style="left:167px;top:757px;width:326px;height:1px;background:#a0a0a0"></div>
<div class="a" style="left:167px;top:758px;width:326px;height:1px;background:#d0d0d0"></div>
<div class="a" style="left:294px;top:758px;width:1px;height:21px;background:#c0c0c0"></div>
<div class="a" style="left:419px;top:758px;width:1px;height:21px;background:#c0c0c0"></div>
<div class="a sr" style="left:167px;top:739px;width:127px;text-align:center;font-weight:bold;font-size:15.5px;line-height:18px;color:#f4f8ff">Firmware Revision</div>
<div class="a sr" style="left:295px;top:739px;width:125px;text-align:center;font-weight:bold;font-size:15.5px;line-height:18px;color:#f4f8ff">Product ID</div>
<div class="a sr" style="left:420px;top:739px;width:73px;text-align:center;font-weight:bold;font-size:15.5px;line-height:18px;color:#f4f8ff">Vendor ID</div>
<div class="a sr" style="left:167px;top:760px;width:127px;text-align:center;font-weight:bold;font-size:15.5px;line-height:18px;color:#0000b0">1.09</div>
<div class="a sr" style="left:295px;top:760px;width:125px;text-align:center;font-weight:bold;font-size:15.5px;line-height:18px;color:#0000b0">GEM359 REV001</div>
<div class="a sr" style="left:420px;top:760px;width:73px;text-align:center;font-weight:bold;font-size:15.5px;line-height:18px;color:#0000b0">SUPER</div>

<!-- ===== PROPERTIES ===== -->
<div class="a sr" style="left:166px;top:593px;font-weight:bold;font-size:17px;line-height:20px;transform:scaleX(1.045);transform-origin:0 0">Enclosure Properties</div>
<div class="a sr" style="left:169px;top:635px;font-weight:bold;font-size:15.6px;line-height:18px">Enclosure Temperature</div>
<div class="a" style="left:300px;top:659px;width:26px;text-align:right;font:14px/16px 'Liberation Sans',sans-serif;color:#000">30</div>
<div class="a sr" style="left:166px;top:717px;font-weight:bold;font-size:15.5px;line-height:18px">General Properties</div>

<!-- right frame -->
<div class="a sr" style="left:1278px;top:266px;font-weight:bold;font-size:16.5px;line-height:19px;transform:scaleX(.99);transform-origin:0 0">Select Device to</div><div class="a sr" style="left:1278px;top:285px;font-weight:bold;font-size:16.5px;line-height:19px;transform:scaleX(.955);transform-origin:0 0">View Operations</div>

<!-- status bar -->
<div class="a" style="left:2px;top:898px;width:1416px;height:24px;background:#D4D0C8"></div>
<div class="a" style="left:2px;top:898px;width:1416px;height:1px;background:#d0d0d0"></div>
<div class="a" style="left:2px;top:900px;width:1416px;height:1px;background:#fff"></div>
<div class="a" style="left:3px;top:903px;width:1086px;height:18px;border-top:1px solid #808080;border-left:1px solid #808080;border-bottom:1px solid #fff;border-right:1px solid #fff"></div>
<div class="a" style="left:1091px;top:903px;width:22px;height:18px;border-top:1px solid #808080;border-left:1px solid #808080;border-bottom:1px solid #fff;border-right:1px solid #fff"></div>
<div class="a" style="left:1115px;top:903px;width:22px;height:18px;border-top:1px solid #808080;border-left:1px solid #808080;border-bottom:1px solid #fff;border-right:1px solid #fff"></div>
<div class="a" style="left:1139px;top:903px;width:22px;height:18px;border-top:1px solid #808080;border-left:1px solid #808080;border-bottom:1px solid #fff;border-right:1px solid #fff"></div>
<div class="a" style="left:1163px;top:903px;width:22px;height:18px;border-top:1px solid #808080;border-left:1px solid #808080;border-bottom:1px solid #fff;border-right:1px solid #fff"></div>
<div class="a" style="left:1187px;top:903px;width:22px;height:18px;border-top:1px solid #808080;border-left:1px solid #808080;border-bottom:1px solid #fff;border-right:1px solid #fff"></div>
<div class="a" style="left:1211px;top:903px;width:206px;height:18px;border-top:1px solid #808080;border-left:1px solid #808080;border-bottom:1px solid #fff;border-right:1px solid #fff"></div>
<div class="a ui" style="left:23px;top:906px">Готово</div>
<div class="a ui" style="left:1232px;top:906px">Местная интрасеть</div>
<svg class="a" style="left:4px;top:904px" width="16" height="16" viewBox="0 0 16 16"><path d="M4 1 H12 L15 4 V15 H4 Z" fill="#e8f0ff" stroke="#6080b0"/><path d="M6 15 H15" stroke="#304060"/><circle cx="7" cy="9" r="5" fill="#3a8ae0"/><circle cx="7" cy="9" r="2.5" fill="#d0e8ff"/><rect x="4" y="8.5" width="6" height="1.3" fill="#3a8ae0"/><path d="M1 13 C3 6 9 3 13 5" stroke="#2a6ad0" stroke-width="1.2" fill="none"/></svg>
<svg class="a" style="left:1213px;top:904px" width="17" height="17" viewBox="0 0 17 17"><rect x="1" y="1" width="8" height="8" fill="#1a8a6a"/><rect x="5" y="3" width="10" height="9" fill="#5ac0f0" stroke="#2a70b0" stroke-width=".8"/><ellipse cx="10" cy="14" rx="4.5" ry="2.5" fill="#e0e8ff" stroke="#405080" stroke-width=".8"/></svg>
<!-- taskbar -->
<div class="a" style="left:0;top:921px;width:1420px;height:29px;background:#D4D0C8"></div>
<div class="a" style="left:0;top:921px;width:1420px;height:1px;background:#f0f0f0"></div>
<div class="a" style="left:0;top:922px;width:1420px;height:1px;background:#fff"></div>
<div class="a" style="left:4px;top:925px;width:51px;height:22px;background:#D4D0C8;border-top:1px solid #fff;border-left:1px solid #fff;border-right:1px solid #000;border-bottom:1px solid #000;box-shadow:inset -1px -1px 0 #808080"></div>
<svg class="a" style="left:7px;top:928px" width="16" height="15" viewBox="0 0 16 15"><path d="M2 1 C4 0 6 0.5 7.5 1.5 L6.5 6.5 C5 5.5 3 5.3 1 6 Z" fill="#f06020"/><path d="M8.5 2 C10.5 3 12.5 3 15 2 L14 7 C11.5 8 9.5 8 7.5 7 Z" fill="#70c020"/><path d="M1 7 C3 6.3 5 6.5 6.3 7.5 L5.3 12.5 C4 11.5 2 11.3 0 12 Z" fill="#2a80f0"/><path d="M7.3 8 C9.3 9 11.3 9 13.8 8 L12.8 13 C10.3 14 8.3 14 6.3 13 Z" fill="#f8c010"/></svg>
<div class="a" style="left:24px;top:931px;font:bold 11.8px/13px 'Liberation Sans',sans-serif;color:#000">Пуск</div>
<div class="a" style="left:62px;top:927px;width:3px;height:19px;border-left:1px solid #fff;border-right:1px solid #808080;border-top:1px solid #fff;border-bottom:1px solid #808080"></div>
<div class="a" style="left:122px;top:927px;width:3px;height:19px;border-left:1px solid #fff;border-right:1px solid #808080;border-top:1px solid #fff;border-bottom:1px solid #808080"></div>
<div class="a" style="left:1291px;top:927px;width:3px;height:19px;border-left:1px solid #fff;border-right:1px solid #808080;border-top:1px solid #fff;border-bottom:1px solid #808080"></div>
<svg class="a" style="left:72px;top:929px" width="16" height="16" viewBox="0 0 16 16"><circle cx="8" cy="8.5" r="6" fill="#3a90e0"/><circle cx="8" cy="8.5" r="3" fill="#e8f4ff"/><rect x="5" y="8" width="7" height="1.6" fill="#3a90e0"/><path d="M1 15 C1 9 8 2 15 2" stroke="#2a70d0" stroke-width="1.5" fill="none"/></svg>
<svg class="a" style="left:95px;top:929px" width="16" height="16" viewBox="0 0 16 16"><rect x="1" y="2" width="13" height="13" rx="1" fill="#2060c0"/><rect x="3" y="4" width="9" height="9" fill="#d8ecff"/><path d="M4 11 L11 4" stroke="#2060c0" stroke-width="2"/><rect x="12" y="1" width="3" height="3" fill="#f06020"/></svg>
<div class="a" style="left:128px;top:925px;width:160px;height:22px;border-top:1px solid #000;border-left:1px solid #000;border-right:1px solid #fff;border-bottom:1px solid #fff;box-shadow:inset 1px 1px 0 #808080;background:repeating-conic-gradient(#D4D0C8 0 25%,#fff 0 50%) 0 0/2px 2px"></div>
<svg class="a" style="left:132px;top:929px" width="16" height="16" viewBox="0 0 16 16"><path d="M4 1 H12 L15 4 V15 H4 Z" fill="#fff" stroke="#404040"/><circle cx="7" cy="9" r="4.5" fill="#2a70e0"/><circle cx="7" cy="9" r="2.2" fill="#d8ecff"/><rect x="4" y="8.5" width="6" height="1.3" fill="#2a70e0"/><path d="M1 14 C2 7 8 4 12 5" stroke="#1a50c0" stroke-width="1.2" fill="none"/></svg>
<div class="a" style="left:152px;top:931px;font:bold 11.5px/13px 'Liberation Sans',sans-serif;color:#000;white-space:nowrap">RAID webConsole 2.8...</div>
<div class="a" style="left:1302px;top:929px;width:13px;height:16px;background:#0A246A"></div>
<div class="a" style="left:1302px;top:931px;width:13px;font:11px/13px 'Liberation Sans',sans-serif;color:#fff;letter-spacing:-1px">RL</div>
<div class="a" style="left:1318px;top:925px;width:98px;height:23px;border-top:1px solid #808080;border-left:1px solid #808080;border-bottom:1px solid #fff;border-right:1px solid #fff"></div>
<svg class="a" style="left:1322px;top:928px" width="16" height="17" viewBox="0 0 16 17"><rect x="8" y="1" width="7" height="9" rx="2" fill="#6aaae8"/><rect x="2" y="5" width="7" height="9" rx="2" fill="#8ac0f8"/><ellipse cx="5" cy="15" rx="4" ry="1.5" fill="#b0c8f0"/><ellipse cx="11.5" cy="11" rx="3.5" ry="1.5" fill="#90b0e0"/></svg>
<svg class="a" style="left:1339px;top:929px" width="18" height="17" viewBox="0 0 18 17"><rect x="1" y="1" width="8" height="14" fill="#e0e0e0" stroke="#404040" stroke-width=".8"/><path d="M2 4 h6 M2 7 h6 M2 10 h6" stroke="#606060"/><circle cx="12" cy="11" r="5" fill="#fff" stroke="#303030"/><path d="M10.5 8 L15 11 L10.5 14 Z" fill="#20a020"/></svg>
<svg class="a" style="left:1358px;top:929px" width="17" height="16" viewBox="0 0 17 16"><rect x="3" y="6" width="13" height="9" fill="#dde" stroke="#000" stroke-width=".8"/><path d="M3 12 C6 9 10 10 14 12" stroke="#40a0b0" fill="none"/><path d="M6 1 L9 2 L13 10 L11 11 Z" fill="#d03030"/><rect x="1" y="8" width="6" height="3" fill="#fff" stroke="#000" stroke-width=".6"/></svg>
<div class="a ui" style="left:1380px;top:932px">12:49</div>
<div class="a" style="left:0;top:0;width:1px;height:950px;background:#606060"></div>
<div class="a" style="left:1px;top:0;width:1px;height:950px;background:#404040"></div>
<div class="a" style="left:1417px;top:18px;width:1px;height:904px;background:#fff"></div>
<div class="a" style="left:1418px;top:0;width:1px;height:950px;background:#c8c8c8"></div>
<div class="a" style="left:1419px;top:0;width:1px;height:950px;background:#f0f0f0"></div>
</body></html>
